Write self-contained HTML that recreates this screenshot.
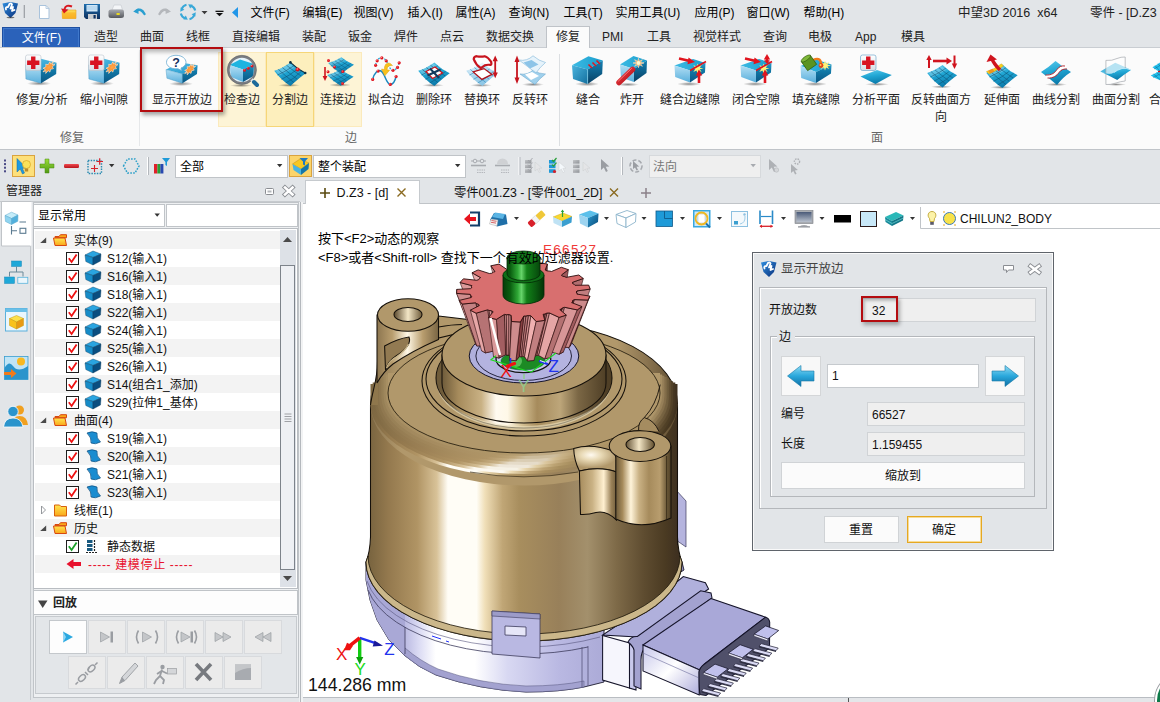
<!DOCTYPE html><html><head><meta charset="utf-8"><title>ZW3D</title><style>
*{box-sizing:border-box;margin:0;padding:0}
html,body{width:1160px;height:702px;overflow:hidden;background:#e2e5e8;}
body{font-family:"Liberation Sans","Noto Sans CJK SC",sans-serif;font-size:12px;color:#1a1a1a;position:relative}
.a{position:absolute}
.t{position:absolute;white-space:nowrap;line-height:16px;height:16px}
.c{text-align:center}
svg{position:absolute;overflow:visible}
</style></head><body>
<div class="t" style="left:250.5px;top:5px;font-size:12px;color:#000">文件(F)</div>
<div class="t" style="left:302.5px;top:5px;font-size:12px;color:#000">编辑(E)</div>
<div class="t" style="left:353.5px;top:5px;font-size:12px;color:#000">视图(V)</div>
<div class="t" style="left:407.5px;top:5px;font-size:12px;color:#000">插入(I)</div>
<div class="t" style="left:455.5px;top:5px;font-size:12px;color:#000">属性(A)</div>
<div class="t" style="left:508.5px;top:5px;font-size:12px;color:#000">查询(N)</div>
<div class="t" style="left:563.5px;top:5px;font-size:12px;color:#000">工具(T)</div>
<div class="t" style="left:615.5px;top:5px;font-size:12px;color:#000">实用工具(U)</div>
<div class="t" style="left:694.5px;top:5px;font-size:12px;color:#000">应用(P)</div>
<div class="t" style="left:746.5px;top:5px;font-size:12px;color:#000">窗口(W)</div>
<div class="t" style="left:803.5px;top:5px;font-size:12px;color:#000">帮助(H)</div>
<div class="t" style="left:958px;top:5px;font-size:12.5px;color:#222">中望3D 2016&nbsp; x64</div>
<div class="t" style="left:1090px;top:5px;font-size:12.5px;color:#222">零件 - [D.Z3</div>
<svg style="left:0px;top:0px" width="260" height="28" viewBox="0 0 260 28">
<defs>
<linearGradient id="tbLogo" x1="0" y1="0" x2="1" y2="1"><stop offset="0" stop-color="#2f8fe0"/><stop offset="1" stop-color="#0a2f7a"/></linearGradient>
<linearGradient id="tbFold" x1="0" y1="0" x2="0" y2="1"><stop offset="0" stop-color="#ffe25a"/><stop offset="1" stop-color="#f59a14"/></linearGradient>
<linearGradient id="tbSave" x1="0" y1="0" x2="0" y2="1"><stop offset="0" stop-color="#1f6fae"/><stop offset="1" stop-color="#0d2f5e"/></linearGradient>
<linearGradient id="tbPrn" x1="0" y1="0" x2="0" y2="1"><stop offset="0" stop-color="#a8abb0"/><stop offset="1" stop-color="#55585e"/></linearGradient>
</defs>
<path d="M2.5,3.5 L10.5,2 L18,3.5 L15.5,13 L10.5,18 L5,13 Z" fill="url(#tbLogo)"/>
<path d="M6,9.5 Q5,7 8,7 L9.5,4 Q11,2.5 12,4.5 L10.5,8.5 L13,7 L12,11 L14.5,10" fill="none" stroke="#fff" stroke-width="1.8" stroke-linejoin="round" stroke-linecap="round"/>
<ellipse cx="10.5" cy="17.5" rx="4" ry="0.8" fill="#222" opacity="0.6"/>
<rect x="23.7" y="5" width="1.2" height="13" fill="#9a9da2"/>
<path d="M39.5,5.5 H46 L49,8.5 V18.5 H39.5 Z" fill="#fff" stroke="#a9c3dc" stroke-width="1"/>
<path d="M46,5.5 V8.5 H49" fill="none" stroke="#a9c3dc" stroke-width="0.8"/>
<path d="M62,11 H67 L68.5,10 H76 V18.5 H62.5 Z" fill="url(#tbFold)" stroke="#e8a020" stroke-width="0.6"/>
<path d="M62,12.5 H75.5 L76,18.5 H62.5 Z" fill="#fbb829" opacity="0.7"/>
<path d="M72,6.5 Q66,4 64.5,9" fill="none" stroke="#d81820" stroke-width="2"/>
<path d="M61,8.5 L68.5,9.5 L64,13.5 Z" fill="#d81820"/>
<path d="M84,4 H100 V19 H86 L84,17 Z" fill="url(#tbSave)"/>
<rect x="86.5" y="5" width="11" height="6.5" fill="#cfe6f7"/>
<path d="M86.5,7 H97.5 M86.5,9 H97.5" stroke="#8fbfe2" stroke-width="0.7"/>
<rect x="88" y="14" width="9" height="5" fill="#c9ccd0"/>
<rect x="93.5" y="15" width="2.2" height="3.5" fill="#0d2f5e"/>
<path d="M112,10 L114,5 H121 L122.5,10 Z" fill="#f4f6f8" stroke="#c5c8cc" stroke-width="0.6"/>
<path d="M108.5,11.5 Q108.5,9.5 111,9.5 H121.5 Q124,9.5 124,11.5 V15.5 Q124,18 121,18 H111 Q108.5,18 108.5,15.5 Z" fill="url(#tbPrn)"/>
<rect x="116.5" y="13" width="3.2" height="2" fill="#e8d820"/>
<path d="M136,11 Q141,7.5 144.5,14" fill="none" stroke="#2a9fd0" stroke-width="2.4" stroke-linecap="round"/>
<path d="M133.2,11.5 L138.5,8.3 L138.5,14 Z" fill="#2a9fd0"/>
<path d="M159.5,14 Q163,7.5 168,11" fill="none" stroke="#b4b7bb" stroke-width="2.4" stroke-linecap="round"/>
<path d="M171,11.5 L165.6,8.3 L165.6,14 Z" fill="#b4b7bb"/>
<g transform="rotate(0 188 12)"><path d="M181.5,9.5 Q183,5.5 186.5,4.8" fill="none" stroke="#38a8d8" stroke-width="2"/><path d="M180.2,11.8 L180.8,7.2 L184.4,9.8 Z" fill="#38a8d8"/></g>
<g transform="rotate(90 188 12)"><path d="M181.5,9.5 Q183,5.5 186.5,4.8" fill="none" stroke="#38a8d8" stroke-width="2"/><path d="M180.2,11.8 L180.8,7.2 L184.4,9.8 Z" fill="#38a8d8"/></g>
<g transform="rotate(180 188 12)"><path d="M181.5,9.5 Q183,5.5 186.5,4.8" fill="none" stroke="#38a8d8" stroke-width="2"/><path d="M180.2,11.8 L180.8,7.2 L184.4,9.8 Z" fill="#38a8d8"/></g>
<g transform="rotate(270 188 12)"><path d="M181.5,9.5 Q183,5.5 186.5,4.8" fill="none" stroke="#38a8d8" stroke-width="2"/><path d="M180.2,11.8 L180.8,7.2 L184.4,9.8 Z" fill="#38a8d8"/></g>
<path d="M201.5,11 H207.5 L204.5,14.2 Z" fill="#3a3a3a"/>
<rect x="215.5" y="10.7" width="8" height="1.3" fill="#111"/>
<path d="M216,13 H223 L219.5,16.3 Z" fill="#111"/>
<path d="M238,7 V18 L232,12.5 Z" fill="#2196e8"/>
</svg>
<div class="a" style="left:2px;top:27px;width:78px;height:21px;background:#2b62ba;border:1px solid #1d4fa2;border-bottom:none;box-shadow:inset 0 0 0 1px #3f78cc"></div>
<div class="t c" style="left:3.0px;top:30px;width:77px;color:#fff;font-size:12px">文件(F)</div>
<div class="a" style="left:0px;top:47px;width:1160px;height:103px;background:#fbfbfb;border-top:1px solid #c9cdd2;border-bottom:1px solid #c0c4c9"></div>
<div class="a" style="left:546px;top:26px;width:44px;height:22px;background:#fbfbfb;border:1px solid #bfc3c8;border-bottom:none"></div>
<div class="t" style="left:94px;top:29px;font-size:12px;color:#222">造型</div>
<div class="t" style="left:140px;top:29px;font-size:12px;color:#222">曲面</div>
<div class="t" style="left:186px;top:29px;font-size:12px;color:#222">线框</div>
<div class="t" style="left:232px;top:29px;font-size:12px;color:#222">直接编辑</div>
<div class="t" style="left:302px;top:29px;font-size:12px;color:#222">装配</div>
<div class="t" style="left:348px;top:29px;font-size:12px;color:#222">钣金</div>
<div class="t" style="left:394px;top:29px;font-size:12px;color:#222">焊件</div>
<div class="t" style="left:440px;top:29px;font-size:12px;color:#222">点云</div>
<div class="t" style="left:486px;top:29px;font-size:12px;color:#222">数据交换</div>
<div class="t" style="left:556px;top:29px;font-size:12px;color:#222">修复</div>
<div class="t" style="left:602px;top:29px;font-size:12px;color:#222">PMI</div>
<div class="t" style="left:647px;top:29px;font-size:12px;color:#222">工具</div>
<div class="t" style="left:693px;top:29px;font-size:12px;color:#222">视觉样式</div>
<div class="t" style="left:763px;top:29px;font-size:12px;color:#222">查询</div>
<div class="t" style="left:808px;top:29px;font-size:12px;color:#222">电极</div>
<div class="t" style="left:855px;top:29px;font-size:12px;color:#222">App</div>
<div class="t" style="left:901px;top:29px;font-size:12px;color:#222">模具</div>
<div class="a" style="left:139px;top:50px;width:1px;height:96px;background:#e6e8ea"></div>
<div class="a" style="left:559px;top:54px;width:1px;height:92px;background:#dcdfe2"></div>
<div class="a" style="left:218px;top:52px;width:48px;height:75px;background:#fdf4d6;border:1px solid #fbeabc"></div>
<div class="a" style="left:314px;top:52px;width:48px;height:75px;background:#fdf4d6;border:1px solid #fbeabc"></div>
<div class="a" style="left:266px;top:52px;width:48px;height:75px;background:#fdefbd;border:1px solid #f6d678"></div>
<div class="a" style="left:140px;top:47px;width:83px;height:65px;border:2px solid #b40c10;box-shadow:2px 3px 4px rgba(0,0,0,.35),inset 2px 3px 4px rgba(0,0,0,.28)"></div>
<div class="a c" style="left:2px;top:92px;width:80px;line-height:17px;font-size:12px;color:#222">修复/分析</div>
<div class="a c" style="left:64px;top:92px;width:80px;line-height:17px;font-size:12px;color:#222">缩小间隙</div>
<div class="a c" style="left:142px;top:92px;width:80px;line-height:17px;font-size:12px;color:#222">显示开放边</div>
<div class="a c" style="left:202px;top:92px;width:80px;line-height:17px;font-size:12px;color:#222">检查边</div>
<div class="a c" style="left:250px;top:92px;width:80px;line-height:17px;font-size:12px;color:#222">分割边</div>
<div class="a c" style="left:298px;top:92px;width:80px;line-height:17px;font-size:12px;color:#222">连接边</div>
<div class="a c" style="left:346px;top:92px;width:80px;line-height:17px;font-size:12px;color:#222">拟合边</div>
<div class="a c" style="left:394px;top:92px;width:80px;line-height:17px;font-size:12px;color:#222">删除环</div>
<div class="a c" style="left:442px;top:92px;width:80px;line-height:17px;font-size:12px;color:#222">替换环</div>
<div class="a c" style="left:490px;top:92px;width:80px;line-height:17px;font-size:12px;color:#222">反转环</div>
<div class="a c" style="left:548px;top:92px;width:80px;line-height:17px;font-size:12px;color:#222">缝合</div>
<div class="a c" style="left:592px;top:92px;width:80px;line-height:17px;font-size:12px;color:#222">炸开</div>
<div class="a c" style="left:650px;top:92px;width:80px;line-height:17px;font-size:12px;color:#222">缝合边缝隙</div>
<div class="a c" style="left:716px;top:92px;width:80px;line-height:17px;font-size:12px;color:#222">闭合空隙</div>
<div class="a c" style="left:776px;top:92px;width:80px;line-height:17px;font-size:12px;color:#222">填充缝隙</div>
<div class="a c" style="left:836px;top:92px;width:80px;line-height:17px;font-size:12px;color:#222">分析平面</div>
<div class="a c" style="left:901px;top:92px;width:80px;line-height:17px;font-size:12px;color:#222">反转曲面方<br>向</div>
<div class="a c" style="left:962px;top:92px;width:80px;line-height:17px;font-size:12px;color:#222">延伸面</div>
<div class="a c" style="left:1016px;top:92px;width:80px;line-height:17px;font-size:12px;color:#222">曲线分割</div>
<div class="a c" style="left:1076px;top:92px;width:80px;line-height:17px;font-size:12px;color:#222">曲面分割</div>
<div class="a c" style="left:1127px;top:92px;width:80px;line-height:17px;font-size:12px;color:#222">合并面</div>
<div class="t c" style="left:42.0px;top:130px;width:60px;color:#666">修复</div>
<div class="t c" style="left:321.0px;top:130px;width:60px;color:#666">边</div>
<div class="t c" style="left:847.0px;top:130px;width:60px;color:#666">面</div>
<svg style="left:0px;top:0px" width="1160" height="100" viewBox="0 0 1160 100"><defs>
<linearGradient id="cL" x1="0" y1="0" x2="0" y2="1"><stop offset="0" stop-color="#b4dff4"/><stop offset="1" stop-color="#58afdc"/></linearGradient>
<linearGradient id="cR" x1="0" y1="0" x2="0" y2="1"><stop offset="0" stop-color="#2a9ccc"/><stop offset="0.35" stop-color="#127aa8"/><stop offset="1" stop-color="#0a5684"/></linearGradient>
<linearGradient id="cT" x1="0" y1="0" x2="1" y2="1"><stop offset="0" stop-color="#5cc4ea"/><stop offset="1" stop-color="#1c93c8"/></linearGradient>
<linearGradient id="dL" x1="0" y1="0" x2="1" y2="1"><stop offset="0" stop-color="#4ab4de"/><stop offset="1" stop-color="#14709f"/></linearGradient>
<linearGradient id="dR" x1="0" y1="0" x2="0" y2="1"><stop offset="0" stop-color="#1581b4"/><stop offset="1" stop-color="#073f63"/></linearGradient>
<linearGradient id="dT" x1="0" y1="0" x2="1" y2="0"><stop offset="0" stop-color="#3cbbe4"/><stop offset="1" stop-color="#1a9ccc"/></linearGradient>
<linearGradient id="mesh" x1="0" y1="0" x2="0.3" y2="1"><stop offset="0" stop-color="#5ccaec"/><stop offset="0.5" stop-color="#20a6d4"/><stop offset="1" stop-color="#0c7cac"/></linearGradient>
<linearGradient id="meshL" x1="0" y1="0" x2="0.3" y2="1"><stop offset="0" stop-color="#d4ecf8"/><stop offset="1" stop-color="#8cc6e6"/></linearGradient>
<radialGradient id="shd"><stop offset="0" stop-color="#000" stop-opacity="0.45"/><stop offset="1" stop-color="#000" stop-opacity="0"/></radialGradient>
<radialGradient id="burst"><stop offset="0" stop-color="#ffa84a"/><stop offset="0.7" stop-color="#f88f32"/><stop offset="1" stop-color="#f07a22"/></radialGradient>
<linearGradient id="wsq" x1="0" y1="0" x2="0" y2="1"><stop offset="0" stop-color="#ffffff"/><stop offset="1" stop-color="#d6dde4"/></linearGradient>
<linearGradient id="redst" x1="0" y1="0" x2="1" y2="1"><stop offset="0" stop-color="#f0444a"/><stop offset="1" stop-color="#b00a12"/></linearGradient>
</defs><g transform="translate(25,55)"><ellipse cx="14" cy="28.5" rx="12" ry="2.2" fill="url(#shd)"/><polygon points="0.5,10 15,3.5 31.5,7.7 16,15" fill="url(#cT)" /><polygon points="0.5,10 16,15 16,28.3 0.9,24" fill="url(#cL)" stroke="#3f93bf" stroke-width="0.4"/><polygon points="16,15 31.5,7.7 31.2,19 16,28.3" fill="url(#cR)" /><g transform="skewY(-25) translate(0,11)"><polygon points="30.0,12.5 27.2,13.5 28.5,15.9 25.6,15.2 24.9,17.7 23.2,15.5 20.7,17.1 21.0,14.5 18.0,14.3 20.2,12.5 18.0,10.7 21.0,10.5 20.7,7.9 23.2,9.5 24.9,7.3 25.6,9.8 28.5,9.1 27.2,11.5" fill="url(#burst)" stroke="#ffe4c8" stroke-width="0.6"/></g><rect x="0.5" y="0" width="15.5" height="15.5" rx="2" fill="url(#wsq)" stroke="#b8c2cc" stroke-width="0.6"/><path d="M6.05,1.6 h4.4 v3.95 h3.95 v4.4 h-3.95 v3.95 h-4.4 v-3.95 h-3.95 v-4.4 h3.95 z" fill="#d81422"/></g>
<g transform="translate(88,55)"><ellipse cx="14" cy="28.5" rx="12" ry="2.2" fill="url(#shd)"/><polygon points="0.5,10 15,3.5 31.5,7.7 16,15" fill="url(#cT)" /><polygon points="0.5,10 16,15 16,28.3 0.9,24" fill="url(#cL)" stroke="#3f93bf" stroke-width="0.4"/><polygon points="16,15 31.5,7.7 31.2,19 16,28.3" fill="url(#cR)" /><g transform="skewY(-25) translate(0,11)"><polygon points="30.0,12.5 27.2,13.5 28.5,15.9 25.6,15.2 24.9,17.7 23.2,15.5 20.7,17.1 21.0,14.5 18.0,14.3 20.2,12.5 18.0,10.7 21.0,10.5 20.7,7.9 23.2,9.5 24.9,7.3 25.6,9.8 28.5,9.1 27.2,11.5" fill="url(#burst)" stroke="#ffe4c8" stroke-width="0.6"/></g><rect x="0.5" y="0" width="15.5" height="15.5" rx="2" fill="url(#wsq)" stroke="#b8c2cc" stroke-width="0.6"/><path d="M6.05,1.6 h4.4 v3.95 h3.95 v4.4 h-3.95 v3.95 h-4.4 v-3.95 h-3.95 v-4.4 h3.95 z" fill="#d81422"/></g>
<g transform="translate(166,55)"><ellipse cx="15" cy="28.8" rx="12" ry="2.2" fill="url(#shd)"/><polygon points="0,14.5 14.7,7.6 31.6,10.2 16.4,19" fill="url(#cT)" /><polygon points="0,14.5 16.4,19 16.4,28.3 0.9,23.2" fill="url(#cL)" stroke="#3f93bf" stroke-width="0.4"/><polygon points="16.4,19 31.6,10.2 31,19 16.4,28.3" fill="url(#cR)" /><g transform="skewY(-28) translate(0,13.5)"><polygon points="29.6,13.5 27.0,14.4 28.3,16.6 25.6,15.9 25.0,18.2 23.4,16.2 21.2,17.6 21.5,15.2 18.7,15.1 20.8,13.5 18.7,11.9 21.5,11.8 21.2,9.4 23.4,10.8 25.0,8.8 25.6,11.1 28.3,10.4 27.0,12.6" fill="url(#burst)" stroke="#ffe4c8" stroke-width="0.6"/></g><path d="M10,0.3 C16.5,0.3 20,4 20,7.3 C20,10 17.5,12.3 15,13 L15.5,15.5 L12,13.8 C4,14.3 0.5,10.5 0.5,7.3 C0.5,3.5 4.5,0.3 10,0.3 Z" fill="#fff" stroke="#6aaad0" stroke-width="0.8"/><text x="6.2" y="11.8" font-family="Liberation Sans, sans-serif" font-weight="bold" font-size="12.5" fill="#16315e">?</text></g>
<g transform="translate(226,55)"><ellipse cx="15" cy="30.5" rx="11" ry="1.6" fill="url(#shd)"/><circle cx="15.900" cy="14.900" r="13" fill="#e4f2fa"/><polygon points="3.5,10 14,4.5 28,9 17,14.5" fill="#1eb4e0" /><polygon points="3.5,10 17,14.5 17,27 5,22" fill="url(#cL)" /><polygon points="17,14.5 28,9 27.5,21 17,27" fill="url(#cR)" /><circle cx="15.900" cy="14.900" r="13.400" fill="none" stroke="#7a7d82" stroke-width="2.400"/><circle cx="15.900" cy="14.900" r="14.600" fill="none" stroke="#55585d" stroke-width="0.500"/><path d="M25.500,24.500 L30,29" stroke="#e4e6e8" stroke-width="3.400"/><path d="M28,27 L31,30" stroke="#1d6a9a" stroke-width="4" stroke-linecap="round"/><circle cx="18.5" cy="15.2" r="1.5" fill="#e0141e"/><circle cx="18.1" cy="14.7" r="0.5249999999999999" fill="#ff9a9a"/><circle cx="22.2" cy="13.2" r="1.5" fill="#e0141e"/><circle cx="21.8" cy="12.7" r="0.5249999999999999" fill="#ff9a9a"/><circle cx="26" cy="11" r="1.5" fill="#e0141e"/><circle cx="25.6" cy="10.5" r="0.5249999999999999" fill="#ff9a9a"/></g>
<g transform="translate(274,55)"><ellipse cx="15" cy="30.3" rx="11" ry="1.6" fill="url(#shd)"/><path d="M0.200,15.700 Q8,13.500 16.400,7.400 Q23,14 31.700,18.200 Q25,23 16.400,31 Q7,25 0.200,15.700 Z" fill="url(#mesh)"/><path d="M1.500,15.600 Q8,13.800 16,8.600 Q18,11 20,12.600 Q12,17.500 5.500,20.500 Q3,18 1.500,15.600 Z" fill="#ffffff" fill-opacity="0.22"/><g fill="none" stroke="#0c4f72" stroke-width="0.55"><path d="M4.300,14.400 Q11,20.500 19.800,27.500"/><path d="M8.400,12.600 Q15.500,18.500 23.200,24.200"/><path d="M12.500,10.200 Q19.500,16 27.200,21"/><path d="M3.500,20 Q11,17 19.800,10.800"/><path d="M7.500,24.300 Q15,21 23.600,14"/><path d="M11.800,28 Q19,24.500 27.600,16.200"/></g><path d="M16.400,7.400 Q23,14 31.700,18.200" fill="none" stroke="#0b2f44" stroke-width="1.1"/><circle cx="16.400" cy="7.400" r="1.300" fill="#0b2f44"/><circle cx="31.200" cy="18" r="1.300" fill="#0b2f44"/><circle cx="23.6" cy="14.5" r="2.1" fill="#e0141e"/><circle cx="23.200000000000003" cy="14.0" r="0.735" fill="#ff9a9a"/></g>
<g transform="translate(322,55)"><ellipse cx="18" cy="30" rx="11" ry="1.8" fill="url(#shd)"/><g transform="translate(5,9) scale(0.84,0.7)"><path d="M0.200,15.700 Q8,13.500 16.400,7.400 Q23,14 31.700,18.200 Q25,23 16.400,31 Q7,25 0.200,15.700 Z" fill="url(#mesh)"/><path d="M1.500,15.600 Q8,13.800 16,8.600 Q18,11 20,12.600 Q12,17.500 5.500,20.500 Q3,18 1.500,15.600 Z" fill="#ffffff" fill-opacity="0.22"/><g fill="none" stroke="#0c4f72" stroke-width="0.55"><path d="M4.300,14.400 Q11,20.500 19.800,27.500"/><path d="M8.400,12.600 Q15.500,18.500 23.200,24.200"/><path d="M12.500,10.200 Q19.500,16 27.200,21"/><path d="M3.500,20 Q11,17 19.800,10.800"/><path d="M7.500,24.300 Q15,21 23.600,14"/><path d="M11.800,28 Q19,24.500 27.600,16.200"/></g></g><g transform="translate(6,-3) scale(0.82,0.7)"><path d="M0.200,15.700 Q8,13.500 16.400,7.400 Q23,14 31.700,18.200 Q25,23 16.400,31 Q7,25 0.200,15.700 Z" fill="url(#mesh)"/><path d="M1.500,15.600 Q8,13.800 16,8.600 Q18,11 20,12.600 Q12,17.500 5.500,20.500 Q3,18 1.500,15.600 Z" fill="#ffffff" fill-opacity="0.22"/><g fill="none" stroke="#0c4f72" stroke-width="0.55"><path d="M4.300,14.400 Q11,20.500 19.800,27.500"/><path d="M8.400,12.600 Q15.500,18.500 23.200,24.200"/><path d="M12.500,10.200 Q19.500,16 27.200,21"/><path d="M3.500,20 Q11,17 19.800,10.800"/><path d="M7.500,24.300 Q15,21 23.600,14"/><path d="M11.800,28 Q19,24.500 27.600,16.200"/></g></g><path d="M3,12 V23.5" stroke="#d0141e" stroke-width="1.6"/><path d="M0.6,21 H5.4 L3,26 Z" fill="#d0141e"/><circle cx="6.5" cy="5.5" r="1.5" fill="#e0141e"/><circle cx="6.1" cy="5.0" r="0.5249999999999999" fill="#ff9a9a"/><circle cx="12.5" cy="12" r="1.5" fill="#e0141e"/><circle cx="12.1" cy="11.5" r="0.5249999999999999" fill="#ff9a9a"/><circle cx="20.8" cy="16.5" r="1.6" fill="#e0141e"/><circle cx="20.400000000000002" cy="16.0" r="0.5599999999999999" fill="#ff9a9a"/><circle cx="6" cy="16.8" r="1.5" fill="#e0141e"/><circle cx="5.6" cy="16.3" r="0.5249999999999999" fill="#ff9a9a"/><circle cx="20.5" cy="28.5" r="1.5" fill="#e0141e"/><circle cx="20.1" cy="28.0" r="0.5249999999999999" fill="#ff9a9a"/></g>
<g transform="translate(370,55)"><path d="M5.600,10.300 Q6.500,3 11.800,2.900 Q16,3 18.800,10.700 Q21,15.500 23,15.300 Q27,15 29.200,7.800" fill="none" stroke="#2aa8d8" stroke-width="1.300" stroke-dasharray="2,1.300"/><path d="M2.700,24.400 C4,18 8,14.500 11,16 C15,18 16,29 20.300,29.400 C24,29.500 25.500,24 26.100,21.500" fill="none" stroke="#1a88c0" stroke-width="1.500"/><path d="M22.500,10.500 Q19,6 15.500,9.500 Q14,12 14.500,14.500 L11.500,14 L14.800,20.800 L19.600,15.200 L17,14.800 Q17,12 19,11 Q20.800,10.300 22.500,10.500 Z" fill="#f8c21c" stroke="#e0a010" stroke-width="0.500"/><circle cx="5.6" cy="10.3" r="1.6" fill="#e0141e"/><circle cx="5.199999999999999" cy="9.8" r="0.5599999999999999" fill="#ff9a9a"/><circle cx="7.2" cy="5.8" r="1.6" fill="#e0141e"/><circle cx="6.8" cy="5.3" r="0.5599999999999999" fill="#ff9a9a"/><circle cx="11.8" cy="2.9" r="1.6" fill="#e0141e"/><circle cx="11.4" cy="2.4" r="0.5599999999999999" fill="#ff9a9a"/><circle cx="16.2" cy="5.8" r="1.6" fill="#e0141e"/><circle cx="15.799999999999999" cy="5.3" r="0.5599999999999999" fill="#ff9a9a"/><circle cx="23" cy="15.3" r="1.6" fill="#e0141e"/><circle cx="22.6" cy="14.8" r="0.5599999999999999" fill="#ff9a9a"/><circle cx="27.5" cy="12.4" r="1.6" fill="#e0141e"/><circle cx="27.1" cy="11.9" r="0.5599999999999999" fill="#ff9a9a"/><circle cx="29.2" cy="7.8" r="1.6" fill="#e0141e"/><circle cx="28.8" cy="7.3" r="0.5599999999999999" fill="#ff9a9a"/><circle cx="2.7" cy="24.4" r="1.6" fill="#e0141e"/><circle cx="2.3000000000000003" cy="23.9" r="0.5599999999999999" fill="#ff9a9a"/><circle cx="8.1" cy="16.1" r="1.6" fill="#e0141e"/><circle cx="7.699999999999999" cy="15.600000000000001" r="0.5599999999999999" fill="#ff9a9a"/><circle cx="20.3" cy="29.4" r="1.6" fill="#e0141e"/><circle cx="19.900000000000002" cy="28.9" r="0.5599999999999999" fill="#ff9a9a"/><circle cx="26.1" cy="21.5" r="1.6" fill="#e0141e"/><circle cx="25.700000000000003" cy="21.0" r="0.5599999999999999" fill="#ff9a9a"/></g>
<g transform="translate(418,55)"><ellipse cx="15" cy="30.3" rx="11" ry="1.6" fill="url(#shd)"/><path d="M0.200,15.700 Q8,13.500 16.400,7.400 Q23,14 31.700,18.200 Q25,23 16.400,31 Q7,25 0.200,15.700 Z" fill="url(#mesh)"/><path d="M1.500,15.600 Q8,13.800 16,8.600 Q18,11 20,12.600 Q12,17.500 5.500,20.500 Q3,18 1.500,15.600 Z" fill="#ffffff" fill-opacity="0.22"/><g fill="none" stroke="#0c4f72" stroke-width="0.55"><path d="M4.300,14.400 Q11,20.500 19.800,27.500"/><path d="M8.400,12.600 Q15.500,18.500 23.200,24.200"/><path d="M12.500,10.200 Q19.500,16 27.200,21"/><path d="M3.500,20 Q11,17 19.800,10.800"/><path d="M7.500,24.300 Q15,21 23.600,14"/><path d="M11.800,28 Q19,24.500 27.600,16.200"/></g><polygon points="8,16.5 17,12 24.5,18 14.5,23.5" fill="#fff" stroke="#c8141e" stroke-width="1.3"/><path d="M12,13.5 L21,23 M9.5,20.5 L22.5,14.5" stroke="#123a5e" stroke-width="2"/></g>
<g transform="translate(466,55)"><ellipse cx="15" cy="30.3" rx="11" ry="1.6" fill="url(#shd)"/><path d="M0.200,15.700 Q8,13.500 16.400,7.400 Q23,14 31.700,18.200 Q25,23 16.400,31 Q7,25 0.200,15.700 Z" fill="url(#meshL)"/><path d="M1.500,15.600 Q8,13.800 16,8.600 Q18,11 20,12.600 Q12,17.500 5.500,20.500 Q3,18 1.500,15.600 Z" fill="#ffffff" fill-opacity="0.22"/><g fill="none" stroke="#3a90c0" stroke-width="0.7"><path d="M4.300,14.400 Q11,20.500 19.800,27.500"/><path d="M8.400,12.600 Q15.500,18.500 23.200,24.200"/><path d="M12.500,10.200 Q19.500,16 27.200,21"/><path d="M3.500,20 Q11,17 19.800,10.800"/><path d="M7.500,24.300 Q15,21 23.600,14"/><path d="M11.800,28 Q19,24.500 27.600,16.200"/></g><polygon points="7.2,16.9 18,13.6 25.9,19.4 15.9,24.4" fill="#fff" stroke="#b01018" stroke-width="1.300"/><path d="M7.700,4.100 Q8,1.500 10.600,1.200 Q15,2.200 18.800,1.200 Q22,2 25,6.600 Q26,9.500 24.600,9.900 Q21,9.500 18.800,10.300 L14.700,13.200 Q10,10 7.700,4.100 Z" fill="#ffffff" fill-opacity="0.5" stroke="#c8141e" stroke-width="2.200" stroke-linejoin="round"/><path d="M29.200,3.500 V20" stroke="#c8141e" stroke-width="1.800"/><path d="M26.600,6.200 L29.200,0.500 L31.800,6.200 Z M26.600,17.500 L29.200,23.200 L31.800,17.500 Z" fill="#c8141e"/></g>
<g transform="translate(514,55)"><ellipse cx="19" cy="29.5" rx="11" ry="1.8" fill="url(#shd)"/><path d="M6,19 Q14,20 19,15 Q25,19 31.5,19 Q25,24 21,29.5 Q13,24 6,19 Z" fill="#9fd0ec" stroke="#5a9cc6" stroke-width="0.5"/><polygon points="11,19.5 18,17 25,21 17,25" fill="#fff" /><path d="M5,5 Q13,6.5 19,0.8 Q25,6 31.5,7.5 Q26,12 22,18 Q13,11 5,5 Z" fill="#e2f1fa" fill-opacity="0.85" stroke="#7db6d8" stroke-width="0.6"/><polygon points="9.5,7.5 17.5,5 24.5,9.5 16,13.5" fill="#8cc4e8" /><path d="M3,4 V25" stroke="#c8141e" stroke-width="1.8"/><path d="M0.5,7 L3,0.5 L5.5,7 Z M0.5,22.5 L3,29 L5.5,22.5 Z" fill="#c8141e"/></g>
<g transform="translate(572,55)"><ellipse cx="15" cy="29" rx="12" ry="2.2" fill="url(#shd)"/><polygon points="0,10.2 16.4,1.3 30.8,5.4 15.6,14.5" fill="url(#dT)" /><polygon points="0,10.2 15.6,14.5 15.6,29 1,24" fill="url(#dL)" /><polygon points="15.6,14.5 30.8,5.4 30.2,19 15.6,29" fill="url(#dR)" /><path d="M15.6,14.5 V29" stroke="#7fd4f0" stroke-width="0.7"/><path d="M16.5,9.5 L20,13 M20.5,7.5 L24,11 M24.5,5.5 L28,9" stroke="#e0141e" stroke-width="1.5"/></g>
<g transform="translate(616,55)"><ellipse cx="12" cy="29.5" rx="11" ry="1.8" fill="url(#shd)"/><polygon points="4,9.5 17.5,1 31,5.5 18,14" fill="url(#dT)" /><polygon points="4,9.5 18,14 18,27 5,22.5" fill="url(#cL)" /><polygon points="18,14 31,5.5 30.5,18 18,27" fill="url(#dR)" /><polygon points="28.0,8.0 24.5,8.7 26.4,11.3 23.3,9.7 22.5,12.7 21.7,9.7 18.6,11.3 20.5,8.7 17.0,8.0 20.5,7.3 18.6,4.7 21.7,6.3 22.5,3.3 23.3,6.3 26.4,4.7 24.5,7.3" fill="url(#burst)" stroke="#ffe4c8" stroke-width="0.6"/><circle cx="22.5" cy="8" r="2" fill="#fffbd0"/><path d="M3,27.5 L16.5,14.5" stroke="url(#redst)" stroke-width="5.5" stroke-linecap="round"/><path d="M2.5,26 L15.5,13.5" stroke="#ff8a8a" stroke-width="1" stroke-linecap="round" opacity="0.8"/></g>
<g transform="translate(674,55)"><ellipse cx="15" cy="29" rx="12" ry="2" fill="url(#shd)"/><polygon points="0.5,10.5 19,4 31.5,8 16,15.5" fill="url(#dT)" /><polygon points="0.5,10.5 16,15.5 16,27.5 1.2,22" fill="url(#cL)" /><polygon points="16,15.5 31.5,8 31,17.5 16,27.5" fill="url(#cR)" /><polygon points="29.5,13.5 25.8,14.3 27.7,17.1 24.5,15.5 23.5,18.6 22.5,15.5 19.3,17.1 21.2,14.3 17.5,13.5 21.2,12.7 19.3,9.9 22.5,11.5 23.5,8.4 24.5,11.5 27.7,9.9 25.8,12.7" fill="#fff27a" /><path d="M16,15.5 L32,6.5" stroke="#e0141e" stroke-width="1.6"/><path d="M5,3.5 L16,6" stroke="#e0141e" stroke-width="2.6"/><path d="M14.5,2.5 L21,7 L13.5,9.2 Z" fill="#e0141e"/><path d="M25,28 V19" stroke="#e0141e" stroke-width="2.6"/><path d="M21.8,20.5 L25,14.5 L28.2,20.5 Z" fill="#e0141e"/></g>
<g transform="translate(740,55)"><ellipse cx="15" cy="29" rx="12" ry="2" fill="url(#shd)"/><polygon points="0.5,10.5 19,4 31.5,8 16,15.5" fill="url(#dT)" /><polygon points="0.5,10.5 16,15.5 16,27.5 1.2,22" fill="url(#cL)" /><polygon points="16,15.5 31.5,8 31,17.5 16,27.5" fill="url(#cR)" /><polygon points="29.5,13.5 25.8,14.3 27.7,17.1 24.5,15.5 23.5,18.6 22.5,15.5 19.3,17.1 21.2,14.3 17.5,13.5 21.2,12.7 19.3,9.9 22.5,11.5 23.5,8.4 24.5,11.5 27.7,9.9 25.8,12.7" fill="#fff27a" /><path d="M16,15.5 L32,6.5" stroke="#e0141e" stroke-width="1.6"/><path d="M5,3.5 L16,6" stroke="#e0141e" stroke-width="2.6"/><path d="M14.5,2.5 L21,7 L13.5,9.2 Z" fill="#e0141e"/><path d="M25,28 V19" stroke="#e0141e" stroke-width="2.6"/><path d="M21.8,20.5 L25,14.5 L28.2,20.5 Z" fill="#e0141e"/><path d="M27,8 V2.5" stroke="#e0141e" stroke-width="2.6"/><path d="M23.8,4.5 L27,-1 L30.2,4.5 Z" fill="#e0141e"/><path d="M24.5,6 H29.5" stroke="#e0141e" stroke-width="1.5"/></g>
<g transform="translate(800,55)"><ellipse cx="15" cy="29" rx="12" ry="2" fill="url(#shd)"/><polygon points="0.5,11 16,4.5 31.5,9.5 16,17" fill="url(#dT)" /><polygon points="0.5,11 16,17 16,28 1.2,23" fill="url(#cL)" /><polygon points="16,17 31.5,9.5 31,18.5 16,28" fill="url(#cR)" /><polygon points="31.0,10.5 27.4,11.3 29.2,14.1 26.0,12.5 25.0,15.6 24.0,12.5 20.8,14.1 22.6,11.3 19.0,10.5 22.6,9.7 20.8,6.9 24.0,8.5 25.0,5.4 26.0,8.5 29.2,6.9 27.4,9.7" fill="#fff27a" /><path d="M13,5 Q22,1 21,12" fill="none" stroke="#f07a1a" stroke-width="2.4"/><circle cx="21" cy="10.5" r="2.4" fill="#e0441a"/><circle cx="20.5" cy="10" r="1" fill="#ffd24a"/><g transform="rotate(-35 9 8)"><rect x="3.5" y="2.5" width="11" height="11" fill="#5a9420" stroke="#2f5a0a" stroke-width="0.7"/><ellipse cx="9" cy="2.5" rx="5.5" ry="2" fill="#7fb83a" stroke="#2f5a0a" stroke-width="0.6"/></g></g>
<g transform="translate(860,55)"><ellipse cx="17" cy="29.3" rx="12" ry="1.6" fill="url(#shd)"/><polygon points="0.5,21.5 17,15 31.8,20 15.5,29" fill="url(#mesh)" /><path d="M9,13.5 L12,16 L15,13.5" fill="#dfe6ec"/><rect x="0.5" y="0" width="15.5" height="15.5" rx="2" fill="url(#wsq)" stroke="#5a9cc6" stroke-width="0.6"/><path d="M6.05,1.6 h4.4 v3.95 h3.95 v4.4 h-3.95 v3.95 h-4.4 v-3.95 h-3.95 v-4.4 h3.95 z" fill="#d81422"/></g>
<g transform="translate(926,55)"><g transform="translate(1,3) scale(0.95,0.95)"><ellipse cx="15" cy="30.3" rx="11" ry="1.6" fill="url(#shd)"/><path d="M0.200,15.700 Q8,13.500 16.400,7.400 Q23,14 31.700,18.200 Q25,23 16.400,31 Q7,25 0.200,15.700 Z" fill="url(#mesh)"/><path d="M1.500,15.600 Q8,13.800 16,8.600 Q18,11 20,12.600 Q12,17.500 5.500,20.500 Q3,18 1.500,15.600 Z" fill="#ffffff" fill-opacity="0.22"/><g fill="none" stroke="#0c4f72" stroke-width="0.55"><path d="M4.300,14.400 Q11,20.500 19.800,27.500"/><path d="M8.400,12.600 Q15.500,18.500 23.200,24.200"/><path d="M12.500,10.200 Q19.500,16 27.200,21"/><path d="M3.500,20 Q11,17 19.800,10.800"/><path d="M7.500,24.300 Q15,21 23.600,14"/><path d="M11.800,28 Q19,24.500 27.600,16.200"/></g></g><path d="M3,13 V3" stroke="#d0141e" stroke-width="2"/><path d="M0.3,5 L3,0 L5.7,5 Z" fill="#d0141e"/><path d="M7,6 H22" stroke="#d0141e" stroke-width="2.6"/><path d="M20.5,2.5 L26,6 L20.5,9.5 Z" fill="#d0141e"/><path d="M28.5,0.5 V10" stroke="#d0141e" stroke-width="2"/><path d="M25.8,8.5 L28.5,14 L31.2,8.5 Z" fill="#d0141e"/></g>
<g transform="translate(986,55)"><g transform="translate(0,2)"><ellipse cx="15" cy="30.3" rx="11" ry="1.6" fill="url(#shd)"/><path d="M0.200,15.700 Q8,13.500 16.400,7.400 Q23,14 31.700,18.200 Q25,23 16.400,31 Q7,25 0.200,15.700 Z" fill="url(#mesh)"/><path d="M1.500,15.600 Q8,13.800 16,8.600 Q18,11 20,12.600 Q12,17.500 5.500,20.500 Q3,18 1.500,15.600 Z" fill="#ffffff" fill-opacity="0.22"/><g fill="none" stroke="#0c4f72" stroke-width="0.55"><path d="M4.300,14.400 Q11,20.500 19.800,27.500"/><path d="M8.400,12.600 Q15.500,18.500 23.200,24.200"/><path d="M12.500,10.200 Q19.500,16 27.200,21"/><path d="M3.500,20 Q11,17 19.800,10.800"/><path d="M7.500,24.300 Q15,21 23.600,14"/><path d="M11.800,28 Q19,24.500 27.600,16.200"/></g></g><path d="M0.5,16.5 Q8,14.5 15.5,8.8 L17.5,11 Q11,15.5 3,19 Z" fill="#f7d21c" stroke="#c8941a" stroke-width="0.4"/><path d="M4,18.5 L8.5,16.5 L6.5,13.8 L2.2,15.8 Z" fill="#f07a1a" opacity="0.7"/><path d="M14,15 Q8,9 6,4" fill="none" stroke="#d0141e" stroke-width="3.4"/><path d="M0.5,7 L4.5,-0.5 L11,4.5 Z" fill="#d0141e"/></g>
<g transform="translate(1040,55)"><ellipse cx="16" cy="29.5" rx="11" ry="1.6" fill="url(#shd)"/><path d="M1,17 Q9,12 15.5,6 Q23,12 31,17 Q23,22 17,30 Q9,23 1,17 Z" fill="url(#mesh)"/><path d="M6,21.5 C12,22 16,19 18,16 C20,13 23,12 26,12.5" fill="none" stroke="#fff" stroke-width="3.4"/><path d="M5.5,20 C12,20.5 15,17.5 17,14.5 C19,11.5 22,10.5 25,11 M7.5,23 C13,23.5 17,20.5 19,17.5 C21,14.5 24,13.8 27,14" fill="none" stroke="#b01820" stroke-width="0.9"/></g>
<g transform="translate(1100,55)"><ellipse cx="16" cy="29.5" rx="10" ry="1.4" fill="url(#shd)"/><path d="M0.300,16.400 Q8,12 15.200,7.800 Q23,11 31,15 Q26,12.500 22,13.500 Q17,15 14,17.500 Q9,20.500 0.300,16.400 Z" fill="#4ab8e0"/><path d="M5.900,5.400 Q12,6 17,3.500 Q21,1.800 25.200,2 V26 Q20,26.500 16,28 Q10,30 5.900,29.500 Z" fill="#ffffff" fill-opacity="0.6" stroke="#a4a8ad" stroke-width="0.7"/><path d="M0.300,16.400 Q9,20.500 14,17.500 Q17,15 22,13.500 Q26,12.500 31,15 Q24,19.500 17.200,25 Q9,20.500 0.300,16.400 Z" fill="url(#mesh)"/><path d="M14,17.500 Q17,15 22,13.500 Q26,12.500 31,15" fill="none" stroke="#bfeaf8" stroke-width="0.9"/></g>
<g transform="translate(1150,55)"><path d="M2.400,12.300 Q7,9.500 12,6 L12,18.500 Q7,15.500 2.400,12.300 Z" fill="#22c0ec"/><path d="M0.700,20.500 Q6,18 12,14.500 L12,26 Q6,24 0.700,20.500 Z" fill="#22c0ec"/><path d="M5,10.600 L10,16 M8,8.700 L10,11 M3.500,19 L10,24.500 M6.500,17.500 L10,20.500 M4,14 L10,10.500 M3,22.500 L10,19" stroke="#0c6a94" stroke-width="0.5" fill="none"/><path d="M8,16.500 h3" stroke="#d0141e" stroke-width="1.4"/></g>
</svg>
<div class="a" style="left:175px;top:155px;width:113px;height:23px;background:#fff;border:1px solid #c0c4c8"></div>
<div class="t" style="left:180px;top:158.5px;color:#000">全部</div>
<div class="a" style="left:313px;top:155px;width:153px;height:23px;background:#fff;border:1px solid #c0c4c8"></div>
<div class="t" style="left:318px;top:158.5px;color:#000">整个装配</div>
<div class="a" style="left:649px;top:155px;width:112px;height:23px;background:#efefef;border:1px solid #d6d9dc"></div>
<div class="t" style="left:653px;top:158.5px;color:#777">法向</div>
<svg style="left:0px;top:150px" width="1160" height="32" viewBox="0 150 1160 32"><defs><linearGradient id="gplus" x1="0" y1="0" x2="0" y2="1"><stop offset="0" stop-color="#9adc3a"/><stop offset="1" stop-color="#4f9a14"/></linearGradient>
    <linearGradient id="gminus" x1="0" y1="0" x2="0" y2="1"><stop offset="0" stop-color="#f04a50"/><stop offset="1" stop-color="#b8141c"/></linearGradient>
    <linearGradient id="ggray" x1="0" y1="0" x2="1" y2="1"><stop offset="0" stop-color="#c4c6c9"/><stop offset="1" stop-color="#8e9196"/></linearGradient></defs><rect x="4" y="159.5" width="2" height="2" fill="#4a4a86"/><rect x="4" y="163.1" width="2" height="2" fill="#4a4a86"/><rect x="4" y="166.7" width="2" height="2" fill="#4a4a86"/><rect x="4" y="170.3" width="2" height="2" fill="#4a4a86"/><rect x="12.5" y="155.5" width="22" height="21" fill="#fde07a" stroke="#d9a340" stroke-width="1"/><path d="M17,158.5 L17,172 L20.2,169 L22.5,174 L24.5,173 L22.3,168.3 L26.5,168 Z" fill="#1e9ae0" stroke="#0f6aa8" stroke-width="0.5"/><circle cx="26.5" cy="164.5" r="4" fill="#fbe15a" stroke="#d8a520" stroke-width="0.7"/><rect x="24.8" y="168.5" width="3.4" height="3" fill="#b98a2a"/><path d="M45,159 h4 v5 h5 v4 h-5 v5 h-4 v-5 h-5 v-4 h5 z" fill="url(#gplus)" stroke="#4a8a14" stroke-width="0.5"/><rect x="64" y="164" width="15" height="4" rx="1.2" fill="url(#gminus)"/><rect x="88" y="160.5" width="13.5" height="13" fill="none" stroke="#2a8ab0" stroke-width="1.4" stroke-dasharray="1.5,1.2"/><path d="M91,168.5 h7 M94.5,165 v7" stroke="#d8202a" stroke-width="1.1"/><path d="M96.5,161.5 h6.5 M99.7,158.3 v6.5" stroke="#d8202a" stroke-width="1.2"/><path d="M109,164 H114.4 L111.7,167.2 Z" fill="#333"/><polygon points="123.5,166 127.5,159 135,159 139,166 135,173 127.5,173" fill="none" stroke="#2a9fc8" stroke-width="1.5" stroke-dasharray="1.6,1.3"/><rect x="147" y="157" width="1" height="18" fill="#fff"/><rect x="148" y="157" width="1" height="18" fill="#b4b8bd"/><rect x="154" y="164" width="3.4" height="9.5" fill="#e0202a"/><rect x="157.4" y="164" width="3" height="9.5" fill="#28a038"/><rect x="160.4" y="164" width="3" height="9.5" fill="#2848b0"/><path d="M162,158 H170 L167,162 V166 L165.4,165 V162 Z" fill="#1e9ad8"/><path d="M277,164 H282.4 L279.7,167.2 Z" fill="#333"/><path d="M455,164 H460.4 L457.7,167.2 Z" fill="#333"/><path d="M750.5,164 H755.9 L753.2,167.2 Z" fill="#a8abb0"/><rect x="289.5" y="155.5" width="22" height="21" fill="#fbd46a" stroke="#d9a340" stroke-width="1"/><polygon points="292.5,164 300,159 309,163 301,169" fill="#f8c820" stroke="#b07a10" stroke-width="0.4"/><polygon points="292.5,164 301,169 301,175 293.5,170" fill="#4ab4e0"/><polygon points="301,169 309,163 308.5,169 301,175" fill="#1477aa"/><path d="M299.5,158 H308 L305,161.5 V165.5 L303,164.5 V161.5 Z" fill="#1e7ac0"/><g stroke="#a8abb0" fill="none" stroke-width="1"><circle cx="475" cy="161" r="1.8"/><circle cx="482" cy="161" r="1.8"/><path d="M471,161 h2 M477,161 h3 M484,161 h2"/><path d="M471,165.5 h15" stroke-width="1.6"/><path d="M477,170 h8 M477,172.5 h8" stroke-width="0.8" stroke-dasharray="1.5,0.8"/></g><g><path d="M497,164 A5.5,5.5 0 0 1 508,164 Z" fill="#cfd1d4"/><path d="M495,165.5 h15" stroke="#a8abb0" stroke-width="1.6"/><path d="M501,170 h8 M501,172.5 h8" stroke="#a8abb0" stroke-width="0.8" stroke-dasharray="1.5,0.8"/></g><rect x="518.5" y="157" width="1" height="18" fill="#fff"/><rect x="519.5" y="157" width="1" height="18" fill="#b4b8bd"/><rect x="525" y="160.0" width="6.5" height="3.6" fill="url(#ggray)"/><rect x="525" y="164.6" width="6.5" height="3.6" fill="url(#ggray)"/><rect x="525" y="169.2" width="6.5" height="3.6" fill="url(#ggray)"/><path d="M535,162 l0,9 l2.3,-2 l1.8,3.6 l1.5,-0.8 l-1.7,-3.4 l3,-0.3 z" fill="#e4e5e7" stroke="#c8cacd" stroke-width="0.4"/><path d="M528,160 l1.5,1.5 l3,-3.5 M528,164.6 l1.5,1.5 l3,-3.5 M528,169.2 l1.5,1.5 l3,-3.5" stroke="#a0a3a8" fill="none" stroke-width="0.9"/><rect x="549" y="160.0" width="6.5" height="3.6" fill="#1e9ad8"/><rect x="549" y="164.6" width="6.5" height="3.6" fill="#1e9ad8"/><rect x="549" y="169.2" width="6.5" height="3.6" fill="#1e9ad8"/><path d="M559,162 l0,9 l2.3,-2 l1.8,3.6 l1.5,-0.8 l-1.7,-3.4 l3,-0.3 z" fill="#f4f8fb" stroke="#c8cacd" stroke-width="0.4"/><path d="M552,160 l1.5,1.5 l3,-3.5 M552,164.6 l1.5,1.5 l3,-3.5" stroke="#28a038" fill="none" stroke-width="1.2"/><circle cx="554.5" cy="171.5" r="1.6" fill="#d8202a"/><rect x="573" y="160.0" width="6.5" height="3.6" fill="url(#ggray)"/><rect x="573" y="164.6" width="6.5" height="3.6" fill="url(#ggray)"/><rect x="573" y="169.2" width="6.5" height="3.6" fill="url(#ggray)"/><path d="M583,162 l0,9 l2.3,-2 l1.8,3.6 l1.5,-0.8 l-1.7,-3.4 l3,-0.3 z" fill="#e4e5e7" stroke="#c8cacd" stroke-width="0.4"/><path d="M601,159 l0,11 l2.8,-2.4 l2.2,4.4 l1.8,-1 l-2.1,-4.2 l3.7,-0.4 z" fill="#9a9da2"/><rect x="621" y="157" width="1" height="18" fill="#fff"/><rect x="622" y="157" width="1" height="18" fill="#b4b8bd"/><circle cx="636" cy="166" r="6" fill="none" stroke="#a8abb0" stroke-width="1.6" stroke-dasharray="4,2"/><path d="M633,161 l0,8 l2,-1.6 l1.6,3.2 l1.4,-0.7 l-1.5,-3.1 l2.7,-0.3 z" fill="#9a9da2"/><path d="M769,159 l0,11 l2.8,-2.4 l2.2,4.4 l1.8,-1 l-2.1,-4.2 l3.7,-0.4 z" fill="#aeb1b5"/><circle cx="776.5" cy="170" r="2.2" fill="#d4d6d9" stroke="#aeb1b5" stroke-width="0.5"/><path d="M791,164 l0,9 l2.3,-2 l1.8,3.6 l1.5,-0.8 l-1.7,-3.4 l3,-0.3 z" fill="#aeb1b5"/><circle cx="797" cy="161.5" r="2.6" fill="none" stroke="#aeb1b5" stroke-width="1.4" stroke-dasharray="1.5,1"/></svg>
<div class="t" style="left:6px;top:182.5px;color:#222">管理器</div>
<div class="a" style="left:0px;top:201px;width:300px;height:1px;background:#c6cace"></div>
<div class="a" style="left:33px;top:202px;width:266px;height:496px;background:#eef0f2;border:1px solid #c0c4c8"></div>
<div class="a" style="left:299px;top:202px;width:1px;height:500px;background:#eef0f2"></div>
<div class="a" style="left:300px;top:202px;width:1px;height:500px;background:#b4b8bd"></div>
<div class="a" style="left:301px;top:202px;width:2px;height:500px;background:#f2f3f4"></div>
<div class="a" style="left:33px;top:204px;width:132px;height:23px;background:#fff;border:1px solid #c0c4c8"></div>
<div class="t" style="left:38px;top:208px;color:#000">显示常用</div>
<div class="a" style="left:166px;top:204px;width:132px;height:23px;background:#fff;border:1px solid #c0c4c8"></div>
<div class="a" style="left:33px;top:228px;width:265px;height:361px;background:#fff;border:1px solid #b9bdc2"></div>
<div class="a" style="left:35px;top:230.5px;width:245px;height:18px;background:#f3f3f3"></div>
<div class="t" style="left:74px;top:232.5px;color:#111;font-size:12px">实体(9)</div>
<div class="t" style="left:107px;top:250.5px;color:#111;font-size:12px">S12(输入1)</div>
<div class="a" style="left:35px;top:266.5px;width:245px;height:18px;background:#f3f3f3"></div>
<div class="t" style="left:107px;top:268.5px;color:#111;font-size:12px">S16(输入1)</div>
<div class="t" style="left:107px;top:286.5px;color:#111;font-size:12px">S18(输入1)</div>
<div class="a" style="left:35px;top:302.5px;width:245px;height:18px;background:#f3f3f3"></div>
<div class="t" style="left:107px;top:304.5px;color:#111;font-size:12px">S22(输入1)</div>
<div class="t" style="left:107px;top:322.5px;color:#111;font-size:12px">S24(输入1)</div>
<div class="a" style="left:35px;top:338.5px;width:245px;height:18px;background:#f3f3f3"></div>
<div class="t" style="left:107px;top:340.5px;color:#111;font-size:12px">S25(输入1)</div>
<div class="t" style="left:107px;top:358.5px;color:#111;font-size:12px">S26(输入1)</div>
<div class="a" style="left:35px;top:374.5px;width:245px;height:18px;background:#f3f3f3"></div>
<div class="t" style="left:107px;top:376.5px;color:#111;font-size:12px">S14(组合1_添加)</div>
<div class="t" style="left:107px;top:394.5px;color:#111;font-size:12px">S29(拉伸1_基体)</div>
<div class="a" style="left:35px;top:410.5px;width:245px;height:18px;background:#f3f3f3"></div>
<div class="t" style="left:74px;top:412.5px;color:#111;font-size:12px">曲面(4)</div>
<div class="t" style="left:107px;top:430.5px;color:#111;font-size:12px">S19(输入1)</div>
<div class="a" style="left:35px;top:446.5px;width:245px;height:18px;background:#f3f3f3"></div>
<div class="t" style="left:107px;top:448.5px;color:#111;font-size:12px">S20(输入1)</div>
<div class="t" style="left:107px;top:466.5px;color:#111;font-size:12px">S21(输入1)</div>
<div class="a" style="left:35px;top:482.5px;width:245px;height:18px;background:#f3f3f3"></div>
<div class="t" style="left:107px;top:484.5px;color:#111;font-size:12px">S23(输入1)</div>
<div class="t" style="left:74px;top:502.5px;color:#111;font-size:12px">线框(1)</div>
<div class="a" style="left:35px;top:518.5px;width:245px;height:18px;background:#f3f3f3"></div>
<div class="t" style="left:74px;top:520.5px;color:#111;font-size:12px">历史</div>
<div class="t" style="left:107px;top:538.5px;color:#111;font-size:12px">静态数据</div>
<div class="a" style="left:35px;top:554.5px;width:245px;height:18px;background:#f3f3f3"></div>
<div class="t" style="left:88px;top:556.5px;color:#e8112d;font-size:12px;letter-spacing:0.65px">----- 建模停止 -----</div>
<div class="a" style="left:280px;top:230px;width:16px;height:357px;background:#dde1e7;"></div>
<div class="a" style="left:280px;top:265px;width:15px;height:305px;background:#eef0f4;border:1px solid #7d838b"></div>
<svg style="left:33px;top:228px" width="266" height="362" viewBox="33 228 266 362"><defs><linearGradient id="tFold" x1="0" y1="0" x2="0" y2="1"><stop offset="0" stop-color="#ffe650"/><stop offset="1" stop-color="#f9a61a"/></linearGradient></defs><path d="M46.200,237.5 V243.0 H40.200 Z" fill="#4a4a4a"/><path d="M55,236.5 h4 l1.500,-1.800 h6 v3 h-11.500 z" fill="#f9a61a" stroke="#d8480e" stroke-width="1"/><path d="M53.500,238.0 h11.500 l1.500,7.500 h-11.500 z" fill="url(#tFold)" stroke="#d8480e" stroke-width="1"/><rect x="66.500" y="252.5" width="12" height="12" fill="#fff" stroke="#1e1e1e" stroke-width="1"/><path d="M68.800,258.3 L71.600,262.0 L76.600,254.5" fill="none" stroke="#ee1111" stroke-width="1.800"/><polygon points="85,255.0 93,251.0 101,254.0 93,257.5" fill="#2aa4e0" stroke="#0a3a5a" stroke-width="0.400"/><polygon points="85,255.0 93,257.5 93,265.0 85.800,261.5" fill="#168cc8" stroke="#0a3a5a" stroke-width="0.400"/><polygon points="93,257.5 101,254.0 100.500,261.0 93,265.0" fill="#0a4e80" stroke="#0a3a5a" stroke-width="0.400"/><rect x="66.500" y="270.5" width="12" height="12" fill="#fff" stroke="#1e1e1e" stroke-width="1"/><path d="M68.800,276.3 L71.600,280.0 L76.600,272.5" fill="none" stroke="#ee1111" stroke-width="1.800"/><polygon points="85,273.0 93,269.0 101,272.0 93,275.5" fill="#2aa4e0" stroke="#0a3a5a" stroke-width="0.400"/><polygon points="85,273.0 93,275.5 93,283.0 85.800,279.5" fill="#168cc8" stroke="#0a3a5a" stroke-width="0.400"/><polygon points="93,275.5 101,272.0 100.500,279.0 93,283.0" fill="#0a4e80" stroke="#0a3a5a" stroke-width="0.400"/><rect x="66.500" y="288.5" width="12" height="12" fill="#fff" stroke="#1e1e1e" stroke-width="1"/><path d="M68.800,294.3 L71.600,298.0 L76.600,290.5" fill="none" stroke="#ee1111" stroke-width="1.800"/><polygon points="85,291.0 93,287.0 101,290.0 93,293.5" fill="#2aa4e0" stroke="#0a3a5a" stroke-width="0.400"/><polygon points="85,291.0 93,293.5 93,301.0 85.800,297.5" fill="#168cc8" stroke="#0a3a5a" stroke-width="0.400"/><polygon points="93,293.5 101,290.0 100.500,297.0 93,301.0" fill="#0a4e80" stroke="#0a3a5a" stroke-width="0.400"/><rect x="66.500" y="306.5" width="12" height="12" fill="#fff" stroke="#1e1e1e" stroke-width="1"/><path d="M68.800,312.3 L71.600,316.0 L76.600,308.5" fill="none" stroke="#ee1111" stroke-width="1.800"/><polygon points="85,309.0 93,305.0 101,308.0 93,311.5" fill="#2aa4e0" stroke="#0a3a5a" stroke-width="0.400"/><polygon points="85,309.0 93,311.5 93,319.0 85.800,315.5" fill="#168cc8" stroke="#0a3a5a" stroke-width="0.400"/><polygon points="93,311.5 101,308.0 100.500,315.0 93,319.0" fill="#0a4e80" stroke="#0a3a5a" stroke-width="0.400"/><rect x="66.500" y="324.5" width="12" height="12" fill="#fff" stroke="#1e1e1e" stroke-width="1"/><path d="M68.800,330.3 L71.600,334.0 L76.600,326.5" fill="none" stroke="#ee1111" stroke-width="1.800"/><polygon points="85,327.0 93,323.0 101,326.0 93,329.5" fill="#2aa4e0" stroke="#0a3a5a" stroke-width="0.400"/><polygon points="85,327.0 93,329.5 93,337.0 85.800,333.5" fill="#168cc8" stroke="#0a3a5a" stroke-width="0.400"/><polygon points="93,329.5 101,326.0 100.500,333.0 93,337.0" fill="#0a4e80" stroke="#0a3a5a" stroke-width="0.400"/><rect x="66.500" y="342.5" width="12" height="12" fill="#fff" stroke="#1e1e1e" stroke-width="1"/><path d="M68.800,348.3 L71.600,352.0 L76.600,344.5" fill="none" stroke="#ee1111" stroke-width="1.800"/><polygon points="85,345.0 93,341.0 101,344.0 93,347.5" fill="#2aa4e0" stroke="#0a3a5a" stroke-width="0.400"/><polygon points="85,345.0 93,347.5 93,355.0 85.800,351.5" fill="#168cc8" stroke="#0a3a5a" stroke-width="0.400"/><polygon points="93,347.5 101,344.0 100.500,351.0 93,355.0" fill="#0a4e80" stroke="#0a3a5a" stroke-width="0.400"/><rect x="66.500" y="360.5" width="12" height="12" fill="#fff" stroke="#1e1e1e" stroke-width="1"/><path d="M68.800,366.3 L71.600,370.0 L76.600,362.5" fill="none" stroke="#ee1111" stroke-width="1.800"/><polygon points="85,363.0 93,359.0 101,362.0 93,365.5" fill="#2aa4e0" stroke="#0a3a5a" stroke-width="0.400"/><polygon points="85,363.0 93,365.5 93,373.0 85.800,369.5" fill="#168cc8" stroke="#0a3a5a" stroke-width="0.400"/><polygon points="93,365.5 101,362.0 100.500,369.0 93,373.0" fill="#0a4e80" stroke="#0a3a5a" stroke-width="0.400"/><rect x="66.500" y="378.5" width="12" height="12" fill="#fff" stroke="#1e1e1e" stroke-width="1"/><path d="M68.800,384.3 L71.600,388.0 L76.600,380.5" fill="none" stroke="#ee1111" stroke-width="1.800"/><polygon points="85,381.0 93,377.0 101,380.0 93,383.5" fill="#2aa4e0" stroke="#0a3a5a" stroke-width="0.400"/><polygon points="85,381.0 93,383.5 93,391.0 85.800,387.5" fill="#168cc8" stroke="#0a3a5a" stroke-width="0.400"/><polygon points="93,383.5 101,380.0 100.500,387.0 93,391.0" fill="#0a4e80" stroke="#0a3a5a" stroke-width="0.400"/><rect x="66.500" y="396.5" width="12" height="12" fill="#fff" stroke="#1e1e1e" stroke-width="1"/><path d="M68.800,402.3 L71.600,406.0 L76.600,398.5" fill="none" stroke="#ee1111" stroke-width="1.800"/><polygon points="85,399.0 93,395.0 101,398.0 93,401.5" fill="#2aa4e0" stroke="#0a3a5a" stroke-width="0.400"/><polygon points="85,399.0 93,401.5 93,409.0 85.800,405.5" fill="#168cc8" stroke="#0a3a5a" stroke-width="0.400"/><polygon points="93,401.5 101,398.0 100.500,405.0 93,409.0" fill="#0a4e80" stroke="#0a3a5a" stroke-width="0.400"/><path d="M46.200,417.5 V423.0 H40.200 Z" fill="#4a4a4a"/><path d="M55,416.5 h4 l1.500,-1.800 h6 v3 h-11.500 z" fill="#f9a61a" stroke="#d8480e" stroke-width="1"/><path d="M53.500,418.0 h11.500 l1.500,7.500 h-11.500 z" fill="url(#tFold)" stroke="#d8480e" stroke-width="1"/><rect x="66.500" y="432.5" width="12" height="12" fill="#fff" stroke="#1e1e1e" stroke-width="1"/><path d="M68.800,438.3 L71.600,442.0 L76.600,434.5" fill="none" stroke="#ee1111" stroke-width="1.800"/><path d="M87,433.0 Q92,430.5 97,433.0 Q96,438.0 100.500,442.0 Q95,445.0 91,443.0 Q92,438.0 87,433.0 Z" fill="#1a8cd0" stroke="#0a4e80" stroke-width="0.700"/><rect x="66.500" y="450.5" width="12" height="12" fill="#fff" stroke="#1e1e1e" stroke-width="1"/><path d="M68.800,456.3 L71.600,460.0 L76.600,452.5" fill="none" stroke="#ee1111" stroke-width="1.800"/><path d="M87,451.0 Q92,448.5 97,451.0 Q96,456.0 100.500,460.0 Q95,463.0 91,461.0 Q92,456.0 87,451.0 Z" fill="#1a8cd0" stroke="#0a4e80" stroke-width="0.700"/><rect x="66.500" y="468.5" width="12" height="12" fill="#fff" stroke="#1e1e1e" stroke-width="1"/><path d="M68.800,474.3 L71.600,478.0 L76.600,470.5" fill="none" stroke="#ee1111" stroke-width="1.800"/><path d="M87,469.0 Q92,466.5 97,469.0 Q96,474.0 100.500,478.0 Q95,481.0 91,479.0 Q92,474.0 87,469.0 Z" fill="#1a8cd0" stroke="#0a4e80" stroke-width="0.700"/><rect x="66.500" y="486.5" width="12" height="12" fill="#fff" stroke="#1e1e1e" stroke-width="1"/><path d="M68.800,492.3 L71.600,496.0 L76.600,488.5" fill="none" stroke="#ee1111" stroke-width="1.800"/><path d="M87,487.0 Q92,484.5 97,487.0 Q96,492.0 100.500,496.0 Q95,499.0 91,497.0 Q92,492.0 87,487.0 Z" fill="#1a8cd0" stroke="#0a4e80" stroke-width="0.700"/><path d="M41.500,506.0 L45.500,510.0 L41.500,514.0 Z" fill="#fff" stroke="#8a8d92" stroke-width="0.9"/><path d="M54.500,505.0 h5 l1.500,1.500 h5.500 v9.500 h-12 z" fill="url(#tFold)" stroke="#d8600e" stroke-width="1"/><path d="M46.200,525.5 V531.0 H40.200 Z" fill="#4a4a4a"/><path d="M55,524.5 h4 l1.500,-1.800 h6 v3 h-11.500 z" fill="#f9a61a" stroke="#d8480e" stroke-width="1"/><path d="M53.500,526.0 h11.500 l1.500,7.500 h-11.500 z" fill="url(#tFold)" stroke="#d8480e" stroke-width="1"/><rect x="66.500" y="540.5" width="12" height="12" fill="#fff" stroke="#1e1e1e" stroke-width="1"/><path d="M68.800,546.3 L71.600,550.0 L76.600,542.5" fill="none" stroke="#1aa028" stroke-width="1.800"/><rect x="87" y="540.0" width="5.500" height="3" fill="#1a5a80"/><rect x="87" y="544.0" width="5.500" height="3" fill="#1a5a80"/><rect x="87" y="548.0" width="5.500" height="3" fill="#1a5a80"/><path d="M94.500,540.0 V551.0 M86,552.5 H98" stroke="#222" stroke-width="1.200" stroke-dasharray="2,1"/><path d="M66.500,564.0 L73.500,559.0 V562.0 H81 V566.0 H73.500 V569.0 Z" fill="#e8112d"/><path d="M154.5,213.5 H159.900 L157.200,216.700 Z" fill="#333"/><path d="M283,242 H292 L287.500,237 Z" fill="#4a4a4a"/><path d="M283,576 H292 L287.500,581 Z" fill="#4a4a4a"/><path d="M284.500,414 h7 M284.500,416.500 h7 M284.500,419 h7 M284.500,421.500 h7" stroke="#8a8d92" stroke-width="0.8"/></svg>
<svg style="left:0px;top:200px" width="34" height="240" viewBox="0 200 34 240"><path d="M31,201.500 H1.500 V246 H30.500" fill="#fff" stroke="#c0c4c8" stroke-width="1"/><rect x="30" y="202" width="1.500" height="43.500" fill="#fff"/><path d="M30.500,246 V700" stroke="#c6cace" stroke-width="1" fill="none"/><polygon points="5,215.500 11.500,212.200 18,215 11.500,218.500" fill="#c4ecf9" stroke="#5aa8cc" stroke-width="0.5"/><polygon points="5,215.500 11.500,218.500 11.500,224.500 5.500,221.500" fill="#8fd4f0" stroke="#5aa8cc" stroke-width="0.5"/><polygon points="11.500,218.500 18,215 17.800,221.300 11.500,224.500" fill="#52b0dc" stroke="#5aa8cc" stroke-width="0.5"/><path d="M11.500,226 V234.500 M11.500,230.700 H17 M19.500,222 H26" fill="none" stroke="#5a7a90" stroke-width="1.100"/><rect x="20" y="228.300" width="5.800" height="5" fill="#fff" stroke="#5a7a90" stroke-width="1.100"/><rect x="11.500" y="261" width="10" height="5.500" fill="#1ea8d8" stroke="#1a88b8" stroke-width="0.500"/><path d="M16.500,266.500 V272 M9.500,276.500 V272 H23 V276.500" fill="none" stroke="#6a8a9a" stroke-width="1"/><rect x="4.500" y="277" width="10" height="6.500" fill="#1ea8d8" stroke="#1a88b8" stroke-width="0.500"/><rect x="17.800" y="277.300" width="10" height="6" fill="#eaf6fc" stroke="#5ab4dc" stroke-width="0.800"/><rect x="5.500" y="308.500" width="21.500" height="22.500" fill="#eaf6fc" stroke="#5ab0dc" stroke-width="1"/><rect x="5.500" y="308.500" width="21.500" height="3.500" fill="#6ac0e8"/><polygon points="9.500,318.500 16.500,315.500 23.500,318.500 16.500,322" fill="#fbe04a" stroke="#c89a10" stroke-width="0.5"/><polygon points="9.500,318.500 16.500,322 16.500,329 9.500,325.500" fill="#f8c21c" stroke="#c89a10" stroke-width="0.5"/><polygon points="16.500,322 23.500,318.500 23.500,325.500 16.500,329" fill="#e89a14" stroke="#c89a10" stroke-width="0.5"/><rect x="4.500" y="356.500" width="23.500" height="23" fill="#bfe4f6" stroke="#3a9fd0" stroke-width="0.8"/><circle cx="21" cy="361.500" r="4" fill="#f8b820"/><path d="M4.500,379.500 V368 Q9,360 13,366 Q18,373 28,366 V379.500 Z" fill="#2a94cc"/><path d="M4,372 H11 V369 L16.500,373.500 L11,378 V375 H4 Z" fill="#f07a1a"/><circle cx="19.500" cy="410" r="4.500" fill="#f0a020"/><path d="M12,425 Q13,416 19.500,416 Q27,416 28,425 Z" fill="#f0a020"/><circle cx="13" cy="411.500" r="5.200" fill="#2a94cc" stroke="#fff" stroke-width="0.8"/><path d="M3.500,427 Q4.500,418 13,418 Q21.500,418 23,427 Z" fill="#2a94cc" stroke="#fff" stroke-width="0.8"/></svg>
<div class="a" style="left:33px;top:590px;width:265px;height:25px;background:#fdfdfd;border:1px solid #c0c4c8"></div>
<div class="t" style="left:53px;top:595px;font-weight:bold;color:#222">回放</div>
<div class="a" style="left:35px;top:616px;width:262px;height:78px;background:#e3e6e9;border:1px solid #c6cace"></div>
<svg style="left:33px;top:588px" width="270" height="114" viewBox="33 588 270 114"><path d="M38,600.5 H47.5 L42.7,608 Z" fill="#444"/><rect x="49.5" y="620.5" width="37" height="33" fill="#fdfdfd" stroke="#c4c8cc" stroke-width="1"/><rect x="88.5" y="620.5" width="37" height="33" fill="#ebebeb" stroke="#d8dadd" stroke-width="1"/><rect x="127.5" y="620.5" width="37" height="33" fill="#ebebeb" stroke="#d8dadd" stroke-width="1"/><rect x="166.5" y="620.5" width="37" height="33" fill="#ebebeb" stroke="#d8dadd" stroke-width="1"/><rect x="205.5" y="620.5" width="37" height="33" fill="#ebebeb" stroke="#d8dadd" stroke-width="1"/><rect x="244.5" y="620.5" width="37" height="33" fill="#ebebeb" stroke="#d8dadd" stroke-width="1"/><rect x="68.5" y="656.5" width="37" height="32" fill="#ebebeb" stroke="#d8dadd" stroke-width="1"/><rect x="107.5" y="656.5" width="37" height="32" fill="#ebebeb" stroke="#d8dadd" stroke-width="1"/><rect x="146.5" y="656.5" width="37" height="32" fill="#ebebeb" stroke="#d8dadd" stroke-width="1"/><rect x="185.5" y="656.5" width="37" height="32" fill="#ebebeb" stroke="#d8dadd" stroke-width="1"/><rect x="224.5" y="656.5" width="37" height="32" fill="#ebebeb" stroke="#d8dadd" stroke-width="1"/><path d="M63,631.500 L73,637 L63,642.500 Z" fill="#2aa8e0"/><path d="M63,631.500 L66,637 L63,642.500 Z" fill="#8fd4f4"/><path d="M100.5,632.0 L109.5,637 L100.5,642.0 Z" fill="#c4c6c9" stroke="#9a9da2" stroke-width="0.7"/><rect x="110.5" y="631.500" width="2.500" height="11" fill="#9a9da2"/><path d="M142.5,632.0 L151.5,637 L142.5,642.0 Z" fill="#c4c6c9" stroke="#9a9da2" stroke-width="0.7"/><path d="M138.500,630.500 Q134.500,637 138.500,643.500 M155.500,630.500 Q159.500,637 155.500,643.500" fill="none" stroke="#9a9da2" stroke-width="1.600"/><path d="M181,632.0 L190,637 L181,642.0 Z" fill="#c4c6c9" stroke="#9a9da2" stroke-width="0.7"/><rect x="190.500" y="631.500" width="2.500" height="11" fill="#9a9da2"/><path d="M178.500,630.500 Q174.500,637 178.500,643.500 M194.500,630.500 Q198.500,637 194.500,643.500" fill="none" stroke="#9a9da2" stroke-width="1.600"/><path d="M215,632.5 L223,637 L215,641.5 Z" fill="#c4c6c9" stroke="#9a9da2" stroke-width="0.7"/><path d="M223,632.5 L231,637 L223,641.5 Z" fill="#c4c6c9" stroke="#9a9da2" stroke-width="0.7"/><path d="M263,632.5 L255,637 L263,641.5 Z" fill="#c4c6c9" stroke="#9a9da2" stroke-width="0.7"/><path d="M271,632.5 L263,637 L271,641.5 Z" fill="#c4c6c9" stroke="#9a9da2" stroke-width="0.7"/><g fill="none" stroke="#9a9da2" stroke-width="1.500"><ellipse cx="82" cy="678" rx="4" ry="2.600" transform="rotate(-45 82 678)"/><ellipse cx="91.500" cy="668.500" rx="4" ry="2.600" transform="rotate(-45 91.500 668.500)"/><path d="M78,682 l-2.500,2.500 M95,665 l2.500,-2.500 M85,672 l3,3 M88,670 l1.500,-3"/></g><path d="M119.500,683.500 L122,677 L135,663 L138,666 L125,680.500 Z" fill="#d4d6d9" stroke="#9a9da2" stroke-width="0.900"/><path d="M119.500,683.500 L122,677 L125,680.500 Z" fill="#9a9da2"/><circle cx="162.500" cy="667" r="2.200" fill="#9a9da2"/><path d="M162,669.500 L160,676 L164,680 L163,684 M160,676 L156,680 L154,684 M162,671 L167,673.500 M161.500,671 L157,674" fill="none" stroke="#9a9da2" stroke-width="1.800"/><rect x="167.500" y="668.500" width="9" height="5.500" fill="#d4d6d9" stroke="#9a9da2" stroke-width="0.700"/><path d="M196,664 L211,680 M211,664 L196,680" stroke="#777a7f" stroke-width="3.6"/><rect x="235" y="664.500" width="16" height="15.500" fill="#a8abb0"/><path d="M235,664.500 H251 V668 Q243,668 235,673 Z" fill="#c4c6c9"/></svg>
<div class="a" style="left:303px;top:203px;width:857px;height:1px;background:#c0c4c8"></div>
<div class="a" style="left:305px;top:180px;width:115px;height:25px;background:#fff;border:1px solid #c6cace;border-bottom:none"></div>
<div class="t" style="left:336.5px;top:185px;font-size:12.5px;color:#111">D.Z3 - [d]</div>
<div class="t" style="left:454px;top:185px;font-size:12.3px;color:#111">零件001.Z3 - [零件001_2D]</div>
<div class="a" style="left:303px;top:204px;width:857px;height:493px;background:#fff"></div>
<div class="a" style="left:306px;top:181px;width:113px;height:25px;background:#fff"></div>
<div class="t" style="left:336.5px;top:185px;font-size:12.5px;color:#111">D.Z3 - [d]</div>
<svg style="left:0px;top:180px" width="1160" height="26" viewBox="0 180 1160 26"><rect x="265.5" y="188.5" width="8" height="6" rx="1" fill="#fff" stroke="#8a8d92" stroke-width="1"/><rect x="267.5" y="190.5" width="4" height="2" fill="#b4b7bb"/><path d="M285,187.500 L292.500,194.500 M292.500,187.500 L285,194.500" stroke="#8a8d92" stroke-width="4.400" stroke-linecap="square"/><path d="M285,187.500 L292.500,194.500 M292.500,187.500 L285,194.500" stroke="#fff" stroke-width="2.600" stroke-linecap="square"/><path d="M397.5,188.5 L405.5,196.5 M405.5,188.5 L397.5,196.5" stroke="#8a6a20" stroke-width="1.4"/><path d="M610,188.5 L618,196.5 M618,188.5 L610,196.5" stroke="#8a6a20" stroke-width="1.4"/><path d="M641,193 H651 M646,188 V198" stroke="#8a8088" stroke-width="1.5"/><path d="M320,193 H330 M325,188 V198" stroke="#5a4a10" stroke-width="1.6"/></svg>
<svg style="left:0px;top:204px" width="1160" height="30" viewBox="0 204 1160 30"><defs>
<linearGradient id="vb1" x1="0" y1="0" x2="1" y2="1"><stop offset="0" stop-color="#2a9ad0"/><stop offset="1" stop-color="#0a4a78"/></linearGradient>
<linearGradient id="vmon" x1="0" y1="0" x2="0" y2="1"><stop offset="0" stop-color="#4a5a78"/><stop offset="1" stop-color="#b8c0cc"/></linearGradient>
</defs><path d="M470,212.5 H479 V225.5 H470" fill="none" stroke="#123f6a" stroke-width="2.2"/><path d="M464,219 L470,213.5 V217 H476 V221 H470 V224.5 Z" fill="#e8141e"/><path d="M490,220 L494,213 L506,214.5 L507.5,224 L497,226.5 Z" fill="#1f6fa8"/><path d="M492,217 L495,212.5 L505,214 L503,219 Z" fill="#5ab4e4"/><path d="M491,219 L498,220 L497,226 L489.5,224 Z" fill="#f4f4f4" stroke="#999" stroke-width="0.4"/><path d="M491.5,220.5 l5,0.8 M491,222.3 l5,0.8" stroke="#d04040" stroke-width="0.8"/><path d="M514,217 h5 l-2.5,3 z" fill="#333"/><g transform="rotate(-42 536 219)"><rect x="527" y="216" width="6" height="6.5" rx="1.5" fill="#d8202a"/><rect x="533" y="216" width="5" height="6.5" fill="#f4f4f4" stroke="#aaa" stroke-width="0.3"/><rect x="538" y="216" width="8" height="6.5" rx="1" fill="#f0c838"/></g><polygon points="553,217 563,213 572,216.5 562,221" fill="#f8d830" stroke="#c8a010" stroke-width="0.4"/><polygon points="553,217 562,221 562,227 553.5,223" fill="#bfe2f4"/><polygon points="562,221 572,216.5 571.5,222.5 562,227" fill="#3a9fd0"/><path d="M562.5,217 V211" stroke="#28a038" stroke-width="1.2"/><path d="M560.8,212 L562.5,209.5 L564.2,212 Z" fill="#28a038"/><polygon points="579,214.5 590,210.5 598.5,213.5 588,218" fill="#5cc0ea"/><polygon points="579,214.5 588,218 588,227.5 580,223.5" fill="#9dd4f0"/><polygon points="588,218 598.5,213.5 598,222 588,227.5" fill="url(#vb1)"/><path d="M604,217 h5 l-2.5,3 z" fill="#333"/><g fill="#fff" stroke="#8cb4cc" stroke-width="0.9"><polygon points="616,214.5 627,210.5 636,213.5 626,218"/><polygon points="616,214.5 626,218 626,227.5 617,223.5"/><polygon points="626,218 636,213.5 635.5,222 626,227.5"/></g><path d="M641.5,217 h5 l-2.5,3 z" fill="#333"/><rect x="656" y="211" width="16.5" height="15.5" fill="#1e9ad8" stroke="#0f5a8a" stroke-width="0.8"/><path d="M664.5,211 V218.5 H672.5" fill="none" stroke="#0f5a8a" stroke-width="0.9"/><path d="M680,217 h5 l-2.5,3 z" fill="#333"/><rect x="693" y="210" width="17.5" height="17.5" fill="#38a8e0"/><rect x="694.5" y="211.5" width="14.5" height="14.5" fill="#cfe8f6"/><rect x="698" y="214" width="7" height="9" fill="#fff" stroke="#aaa" stroke-width="0.4"/><circle cx="701.5" cy="218.5" r="6" fill="none" stroke="#f0b820" stroke-width="1.8"/><path d="M706,223.5 L710,227.5" stroke="#1f6fa8" stroke-width="1.8"/><path d="M717,217 h5 l-2.5,3 z" fill="#333"/><rect x="731.5" y="211.5" width="16" height="15" fill="#f4f9fc" stroke="#8cc0e0" stroke-width="1"/><rect x="734" y="221" width="4" height="3.5" fill="#3a9fd0"/><path d="M740,224 Q745.5,223 745,216" fill="none" stroke="#8cc0e0" stroke-width="0.8"/><circle cx="744.5" cy="214.5" r="1.2" fill="#8cc0e0"/><path d="M760,210.5 V224 M772.5,210.5 V224" stroke="#2a8ac8" stroke-width="1.6"/><path d="M761,216.5 H771.5" stroke="#2a8ac8" stroke-width="1.2"/><path d="M760,226.3 H772.5" stroke="#d8202a" stroke-width="1.3"/><path d="M759.5,226.3 l2.5,-1.6 v3.2 z M773,226.3 l-2.5,-1.6 v3.2 z" fill="#d8202a"/><path d="M781,217 h5 l-2.5,3 z" fill="#333"/><rect x="795" y="210.5" width="18" height="13" fill="#a8acb2" stroke="#7a7e84" stroke-width="0.6"/><rect x="796.5" y="212" width="15" height="10" fill="url(#vmon)"/><path d="M799,226.5 Q804,224 809,226.5 Z" fill="#8a8e94"/><rect x="798" y="226.3" width="12" height="1.2" fill="#8a8e94"/><path d="M819.5,217 h5 l-2.5,3 z" fill="#333"/><rect x="834" y="215" width="17" height="7.5" fill="#000"/><rect x="860.5" y="211.5" width="16" height="15" fill="#c8e8f8" stroke="#2a1a1a" stroke-width="1"/><polygon points="885,217 896,212 903.5,215.5 892,221" fill="#2ab8b8"/><polygon points="885,217 892,221 892,226 885.5,222" fill="#1a8a9a"/><polygon points="892,221 903.5,215.5 903,220.5 892,226" fill="#147888"/><path d="M885,219.5 L892,223.5 L903.5,218" fill="none" stroke="#7fe0e0" stroke-width="0.6"/><path d="M910,217 h5 l-2.5,3 z" fill="#333"/><path d="M920.5,207 V228.5 H1160" fill="none" stroke="#c0c4c8" stroke-width="1"/><path d="M932,211.5 C928,211.5 927,216 929.5,218.5 L930,221.5 H934 L934.5,218.5 C937,216 936,211.5 932,211.5 Z" fill="#fdf3a8" stroke="#b89a20" stroke-width="0.8"/><rect x="930.2" y="222" width="3.6" height="2.8" fill="#5a5a6a"/><circle cx="949.5" cy="218.5" r="6" fill="#f8e24a" stroke="#3a78b8" stroke-width="1"/><path d="M943,212 h2 M954,212 h2 M943,225 h2 M954,225 h2" stroke="#e8a820" stroke-width="1"/></svg>
<div class="t" style="left:960px;top:210.5px;font-size:12px;color:#111">CHILUN2_BODY</div>
<svg style="left:0px;top:0px" width="1160" height="702" viewBox="0 0 1160 702">
<defs>
<linearGradient id="gBody" gradientUnits="userSpaceOnUse" x1="370" y1="0" x2="678" y2="0"><stop offset="0" stop-color="#7a6540"/><stop offset="0.06" stop-color="#94794e"/><stop offset="0.153" stop-color="#b09464"/><stop offset="0.217" stop-color="#d8c298"/><stop offset="0.253" stop-color="#fffdf6"/><stop offset="0.346" stop-color="#fffdf6"/><stop offset="0.373" stop-color="#f0dfb8"/><stop offset="0.43" stop-color="#c0a676"/><stop offset="0.484" stop-color="#a88e5e"/><stop offset="0.614" stop-color="#98805a"/><stop offset="0.706" stop-color="#a3906c"/><stop offset="0.8" stop-color="#7e6a48"/><stop offset="0.89" stop-color="#5e4c30"/><stop offset="0.96" stop-color="#4a3a22"/><stop offset="1" stop-color="#3e3020"/></linearGradient>
<linearGradient id="gBoss" gradientUnits="userSpaceOnUse" x1="442" y1="0" x2="606" y2="0">
<stop offset="0" stop-color="#6e5b3a"/><stop offset="0.1" stop-color="#a68b5c"/><stop offset="0.24" stop-color="#c9b184"/>
<stop offset="0.33" stop-color="#fffaf0"/><stop offset="0.40" stop-color="#fff8e8"/><stop offset="0.48" stop-color="#d9c69a"/><stop offset="0.58" stop-color="#a68b5c"/><stop offset="0.72" stop-color="#bda67a"/>
<stop offset="0.83" stop-color="#7b6745"/><stop offset="1" stop-color="#4f3f26"/>
</linearGradient>
<linearGradient id="gLug" gradientUnits="userSpaceOnUse" x1="377" y1="0" x2="438" y2="0">
<stop offset="0" stop-color="#8d7650"/><stop offset="0.25" stop-color="#b89d6e"/><stop offset="0.5" stop-color="#fff8e6"/><stop offset="0.75" stop-color="#b89d6e"/><stop offset="1" stop-color="#7b6745"/>
</linearGradient>
<linearGradient id="gLug2" gradientUnits="userSpaceOnUse" x1="616" y1="0" x2="671" y2="0">
<stop offset="0" stop-color="#6e5b3a"/><stop offset="0.12" stop-color="#a68b5c"/><stop offset="0.27" stop-color="#fff4da"/><stop offset="0.42" stop-color="#c9b184"/><stop offset="0.6" stop-color="#a68b5c"/><stop offset="0.8" stop-color="#b89d6e"/><stop offset="0.92" stop-color="#6e5b3a"/><stop offset="1" stop-color="#4f3f26"/>
</linearGradient>
<linearGradient id="gArmF" gradientUnits="userSpaceOnUse" x1="579" y1="0" x2="617" y2="0">
<stop offset="0" stop-color="#a68b5c"/><stop offset="0.35" stop-color="#c9b184"/><stop offset="0.65" stop-color="#fff0d0"/><stop offset="0.85" stop-color="#9a8158"/><stop offset="1" stop-color="#6e5b3a"/>
</linearGradient>
<radialGradient id="gArmT" gradientUnits="userSpaceOnUse" cx="591" cy="455" r="26" gradientTransform="translate(0,227.500) scale(1,0.5)">
<stop offset="0" stop-color="#fffaf0"/><stop offset="0.4" stop-color="#e8d9b5"/><stop offset="1" stop-color="#b1986b"/>
</radialGradient>
<linearGradient id="gBase" gradientUnits="userSpaceOnUse" x1="364" y1="0" x2="690" y2="0">
<stop offset="0" stop-color="#a9a8d6"/><stop offset="0.12" stop-color="#b7b6e0"/><stop offset="0.17" stop-color="#dcdcf4"/><stop offset="0.22" stop-color="#ffffff"/><stop offset="0.34" stop-color="#ffffff"/><stop offset="0.44" stop-color="#d8d8f2"/>
<stop offset="0.6" stop-color="#b9b8e2"/><stop offset="0.8" stop-color="#a5a4d2"/><stop offset="1" stop-color="#8d8cb8"/>
</linearGradient>
<linearGradient id="gShaft" gradientUnits="userSpaceOnUse" x1="503" y1="0" x2="544" y2="0">
<stop offset="0" stop-color="#053d08"/><stop offset="0.18" stop-color="#0a5f10"/><stop offset="0.36" stop-color="#2fa836"/><stop offset="0.45" stop-color="#66d46a"/><stop offset="0.58" stop-color="#128018"/><stop offset="0.8" stop-color="#0a5a10"/><stop offset="1" stop-color="#043207"/>
</linearGradient>
<linearGradient id="gFillet" gradientUnits="userSpaceOnUse" x1="0" y1="470" x2="0" y2="500">
<stop offset="0" stop-color="#b1986b"/><stop offset="0.5" stop-color="#efe2c0"/><stop offset="1" stop-color="#b1986b" stop-opacity="0"/>
</linearGradient>
<linearGradient id="gHole" gradientUnits="userSpaceOnUse" x1="394" y1="0" x2="422" y2="0">
<stop offset="0" stop-color="#5a482c"/><stop offset="0.5" stop-color="#f3e6c6"/><stop offset="1" stop-color="#6e5b3a"/>
</linearGradient>
<linearGradient id="gHole2" gradientUnits="userSpaceOnUse" x1="625" y1="0" x2="653" y2="0">
<stop offset="0" stop-color="#5a482c"/><stop offset="0.5" stop-color="#f3e6c6"/><stop offset="1" stop-color="#6e5b3a"/>
</linearGradient>
<linearGradient id="gConn" gradientUnits="userSpaceOnUse" x1="640" y1="650" x2="690" y2="700">
<stop offset="0" stop-color="#c9c9ec"/><stop offset="0.5" stop-color="#ffffff"/><stop offset="1" stop-color="#b5b4de"/>
</linearGradient>
<linearGradient id="gTop" gradientUnits="userSpaceOnUse" x1="370" y1="0" x2="678" y2="0">
<stop offset="0" stop-color="#8a7450"/><stop offset="0.1" stop-color="#b1986b"/><stop offset="0.8" stop-color="#b1986b"/><stop offset="0.9" stop-color="#8a7450"/><stop offset="1" stop-color="#5c4a2e"/>
</linearGradient>
<linearGradient id="gFil" gradientUnits="userSpaceOnUse" x1="380" y1="0" x2="678" y2="0">
<stop offset="0" stop-color="#a98f62"/><stop offset="0.2" stop-color="#b89d6e"/><stop offset="0.38" stop-color="#dccaa0"/><stop offset="0.52" stop-color="#f8ecd0"/><stop offset="0.64" stop-color="#d9c69a"/>
<stop offset="0.78" stop-color="#b1986b"/><stop offset="0.9" stop-color="#8a7450"/><stop offset="1" stop-color="#5c4a2e"/>
</linearGradient>
</defs>
<path d="M366,562 L366,580 L370,600 L377,620 L389,640 L404,655 Q419,668 436,675 Q480,690 526,692 Q560,692 584,687 L604,682 L604,620 L684,570 L682,562 Z" fill="url(#gBase)" stroke="#1c1b30" stroke-width="0.9"/>
<path d="M404,655 Q419,668 436,675 Q480,690 526,692 Q560,692 584,687 L584,681 Q560,686 526,686 Q480,684 438,669 Q420,661 405,648 Z" fill="#a3a2d0" stroke="#55547c" stroke-width="0.5"/>
<path d="M366,562 L366,580 L370,600 L377,620 L389,640 L404,655 L405,652 L405,600 Z" fill="#a9a8d6"/>
<path d="M405,627 L405,654" stroke="#3c3b5c" stroke-width="0.8" fill="none"/>
<path d="M582,647 L582,687 M588,646 L588,686" stroke="#55547c" stroke-width="0.8" fill="none"/>
<path d="M368,590 A158,79 0 0 0 588,647" stroke="#3c3b5c" stroke-width="0.8" fill="none"/>
<path d="M367,581 A158,79 0 0 0 600,637" stroke="#55547c" stroke-width="0.6" fill="none"/>
<path d="M432,636 L441,639 M446,641 L449,642" stroke="#2030ff" stroke-width="1" fill="none"/>
<path d="M655,600 L683.3,576.5 L705.4,582.8 L708.6,589 L637.4,637 L602.6,635 Z" fill="#b0b0dc" stroke="#15142a" stroke-width="1.05"/>
<path d="M602.6,635.5 L629.5,643 L629.5,688 L602.6,680 Z" fill="#f6f6fd" stroke="#15142a" stroke-width="1.05"/>
<path d="M629.5,643 L636,645 L636,690 L629.5,688 Z" fill="#c9c9ec" stroke="#15142a" stroke-width="1.05"/>
<path d="M628,642 Q631,636 637.4,636.5 L700.7,590.7 L711,593 L712,598 L646,647 Q641,651 641,660 L641,689 L634,686 L634,650 Q633,646 628,642 Z" fill="#a3a2d0" stroke="#15142a" stroke-width="1.05"/>
<path d="M711,598.6 L765.6,617.2 L704.5,664 L699.2,669.8 L643,645 Z" fill="#a9a8d8" stroke="#15142a" stroke-width="1.05"/>
<path d="M643,645 L699.2,669.8 L699.2,695 L643,671 Z" fill="url(#gConn)" stroke="#15142a" stroke-width="1.05"/>
<path d="M643,653 L699.2,678" stroke="#7d7ca8" stroke-width="0.7"/>
<path d="M704.5,664 L765.6,617.2 Q769,618 769.7,622 L769.5,648 L706,695.5 L700,694.5 Q699,690 699,672 Q700,667 704.5,664 Z" fill="#50506a" stroke="#15142a" stroke-width="1.05"/>
<path d="M761.2,643.6 l17,4.500 l-2.200,2.600 l-17,-4.500 z" fill="#dcdcf6" stroke="#1c1b30" stroke-width="0.7"/>
<path d="M759.0,646.2 l17,4.500 l0,1.300 l-17,-4.500 z" fill="#2c2c40"/>
<path d="M754.8,648.6 l17,4.500 l-2.200,2.600 l-17,-4.500 z" fill="#dcdcf6" stroke="#1c1b30" stroke-width="0.7"/>
<path d="M752.6,651.2 l17,4.500 l0,1.300 l-17,-4.500 z" fill="#2c2c40"/>
<path d="M748.4,653.6 l17,4.500 l-2.200,2.600 l-17,-4.500 z" fill="#dcdcf6" stroke="#1c1b30" stroke-width="0.7"/>
<path d="M746.2,656.2 l17,4.500 l0,1.300 l-17,-4.500 z" fill="#2c2c40"/>
<path d="M742.0,658.6 l17,4.500 l-2.200,2.600 l-17,-4.500 z" fill="#dcdcf6" stroke="#1c1b30" stroke-width="0.7"/>
<path d="M739.8,661.2 l17,4.500 l0,1.300 l-17,-4.500 z" fill="#2c2c40"/>
<path d="M735.6,663.6 l17,4.500 l-2.200,2.600 l-17,-4.500 z" fill="#dcdcf6" stroke="#1c1b30" stroke-width="0.7"/>
<path d="M733.4,666.2 l17,4.500 l0,1.300 l-17,-4.500 z" fill="#2c2c40"/>
<path d="M729.2,668.6 l17,4.500 l-2.200,2.600 l-17,-4.500 z" fill="#dcdcf6" stroke="#1c1b30" stroke-width="0.7"/>
<path d="M727.0,671.2 l17,4.500 l0,1.300 l-17,-4.500 z" fill="#2c2c40"/>
<path d="M722.8,673.6 l17,4.500 l-2.200,2.600 l-17,-4.500 z" fill="#dcdcf6" stroke="#1c1b30" stroke-width="0.7"/>
<path d="M720.6,676.2 l17,4.500 l0,1.300 l-17,-4.500 z" fill="#2c2c40"/>
<path d="M716.4,678.6 l17,4.500 l-2.200,2.600 l-17,-4.500 z" fill="#dcdcf6" stroke="#1c1b30" stroke-width="0.7"/>
<path d="M714.2,681.2 l17,4.500 l0,1.300 l-17,-4.500 z" fill="#2c2c40"/>
<path d="M710.0,683.6 l17,4.500 l-2.200,2.600 l-17,-4.500 z" fill="#dcdcf6" stroke="#1c1b30" stroke-width="0.7"/>
<path d="M707.8,686.2 l17,4.500 l0,1.300 l-17,-4.500 z" fill="#2c2c40"/>
<path d="M703.6,688.6 l17,4.500 l-2.200,2.600 l-17,-4.500 z" fill="#dcdcf6" stroke="#1c1b30" stroke-width="0.7"/>
<path d="M701.4,691.2 l17,4.500 l0,1.300 l-17,-4.500 z" fill="#2c2c40"/>
<path d="M754,634.2 l11.600,-8.300 l13.100,4.600 l-10.900,8.500 Z" fill="#c0c0ec" stroke="#1c1b30" stroke-width="0.8"/>
<path d="M754,634.2 l13.800,4.800 l0,2 l-13.800,-4.800 Z" fill="#f4f4ff" stroke="#1c1b30" stroke-width="0.5"/>
<path d="M728.5,653 l11.600,-8.300 l13.100,4.600 l-10.900,8.500 Z" fill="#c0c0ec" stroke="#1c1b30" stroke-width="0.8"/>
<path d="M728.5,653 l13.800,4.800 l0,2 l-13.800,-4.800 Z" fill="#f4f4ff" stroke="#1c1b30" stroke-width="0.5"/>
<path d="M703.4,672.4 l11.600,-8.300 l13.100,4.600 l-10.900,8.500 Z" fill="#c0c0ec" stroke="#1c1b30" stroke-width="0.8"/>
<path d="M703.4,672.4 l13.800,4.800 l0,2 l-13.800,-4.800 Z" fill="#f4f4ff" stroke="#1c1b30" stroke-width="0.5"/>
<path d="M676,490 L686,501 L686,547 L676,540 Z" fill="#b5b4de" stroke="#3c3b5c" stroke-width="0.7"/>
<path d="M370.5,404 L370.5,537 Q370,552 366,562 A158,79 0 0 0 682,562 Q678,552 677.5,537 L677.5,404 Z" fill="url(#gBody)" stroke="#15100a" stroke-width="1.05"/>
<path d="M366,562 A158,79 0 0 0 682,562 L680,556 A156,78 0 0 1 368,556 Z" fill="#cbb78a" stroke="#1a1408" stroke-width="0.8"/>
<ellipse cx="524" cy="404" rx="153.5" ry="81.5" fill="url(#gTop)"/>
<path d="M370.5,404 A153.5,81.5 0 0 1 677.5,404" fill="none" stroke="#15100a" stroke-width="1.05"/>
<defs><linearGradient id="gF0" gradientUnits="userSpaceOnUse" x1="370" y1="0" x2="678" y2="0"><stop offset="0.000" stop-color="#7a6540"/><stop offset="0.060" stop-color="#94794e"/><stop offset="0.153" stop-color="#b09464"/><stop offset="0.217" stop-color="#d8c298"/><stop offset="0.253" stop-color="#fffdf6"/><stop offset="0.346" stop-color="#fffdf6"/><stop offset="0.373" stop-color="#f0dfb8"/><stop offset="0.430" stop-color="#c0a676"/><stop offset="0.484" stop-color="#a88e5e"/><stop offset="0.614" stop-color="#98805a"/><stop offset="0.706" stop-color="#a3906c"/><stop offset="0.800" stop-color="#7e6a48"/><stop offset="0.890" stop-color="#5e4c30"/><stop offset="0.960" stop-color="#4a3a22"/><stop offset="1.000" stop-color="#3e3020"/></linearGradient><linearGradient id="gF1" gradientUnits="userSpaceOnUse" x1="370" y1="0" x2="678" y2="0"><stop offset="0.000" stop-color="#7b6641"/><stop offset="0.112" stop-color="#957a4f"/><stop offset="0.239" stop-color="#b09464"/><stop offset="0.303" stop-color="#d6c096"/><stop offset="0.339" stop-color="#fcf9f1"/><stop offset="0.432" stop-color="#fcf9f1"/><stop offset="0.459" stop-color="#eddcb5"/><stop offset="0.516" stop-color="#bfa575"/><stop offset="0.570" stop-color="#a88e5e"/><stop offset="0.697" stop-color="#98805a"/><stop offset="0.769" stop-color="#a3906b"/><stop offset="0.843" stop-color="#7f6b49"/><stop offset="0.914" stop-color="#604e32"/><stop offset="0.969" stop-color="#4d3d24"/><stop offset="1.000" stop-color="#423322"/></linearGradient><linearGradient id="gF2" gradientUnits="userSpaceOnUse" x1="370" y1="0" x2="678" y2="0"><stop offset="0.000" stop-color="#7f6a44"/><stop offset="0.138" stop-color="#977c51"/><stop offset="0.284" stop-color="#b09464"/><stop offset="0.348" stop-color="#d3bd93"/><stop offset="0.384" stop-color="#f6f2e6"/><stop offset="0.477" stop-color="#f6f2e6"/><stop offset="0.504" stop-color="#e9d7af"/><stop offset="0.561" stop-color="#bea474"/><stop offset="0.615" stop-color="#a88f5f"/><stop offset="0.740" stop-color="#9a825b"/><stop offset="0.802" stop-color="#a4906b"/><stop offset="0.865" stop-color="#836f4b"/><stop offset="0.926" stop-color="#675436"/><stop offset="0.973" stop-color="#554429"/><stop offset="1.000" stop-color="#4a3b28"/></linearGradient><linearGradient id="gF3" gradientUnits="userSpaceOnUse" x1="370" y1="0" x2="678" y2="0"><stop offset="0.000" stop-color="#856f48"/><stop offset="0.160" stop-color="#9a7f54"/><stop offset="0.320" stop-color="#b09465"/><stop offset="0.384" stop-color="#cfb98e"/><stop offset="0.420" stop-color="#eee7d9"/><stop offset="0.513" stop-color="#eee7d9"/><stop offset="0.540" stop-color="#e2d0a7"/><stop offset="0.597" stop-color="#bca373"/><stop offset="0.651" stop-color="#a99060"/><stop offset="0.775" stop-color="#9d845d"/><stop offset="0.828" stop-color="#a5916b"/><stop offset="0.883" stop-color="#88734f"/><stop offset="0.936" stop-color="#6f5b3c"/><stop offset="0.977" stop-color="#5f4d31"/><stop offset="1.000" stop-color="#55452f"/></linearGradient><linearGradient id="gF4" gradientUnits="userSpaceOnUse" x1="370" y1="0" x2="678" y2="0"><stop offset="0.000" stop-color="#8c754e"/><stop offset="0.179" stop-color="#9d8357"/><stop offset="0.351" stop-color="#b09566"/><stop offset="0.415" stop-color="#cbb489"/><stop offset="0.451" stop-color="#e5dbc8"/><stop offset="0.544" stop-color="#e5dbc8"/><stop offset="0.571" stop-color="#dbc79e"/><stop offset="0.628" stop-color="#bba172"/><stop offset="0.682" stop-color="#aa9162"/><stop offset="0.805" stop-color="#a0875f"/><stop offset="0.851" stop-color="#a7926b"/><stop offset="0.899" stop-color="#8e7953"/><stop offset="0.944" stop-color="#796543"/><stop offset="0.980" stop-color="#6b593a"/><stop offset="1.000" stop-color="#635238"/></linearGradient><linearGradient id="gF5" gradientUnits="userSpaceOnUse" x1="370" y1="0" x2="678" y2="0"><stop offset="0.000" stop-color="#937d54"/><stop offset="0.196" stop-color="#a1875b"/><stop offset="0.379" stop-color="#b09567"/><stop offset="0.443" stop-color="#c5ae82"/><stop offset="0.479" stop-color="#dacdb4"/><stop offset="0.572" stop-color="#dacdb4"/><stop offset="0.599" stop-color="#d2bd93"/><stop offset="0.656" stop-color="#b89f70"/><stop offset="0.710" stop-color="#ac9264"/><stop offset="0.832" stop-color="#a38b62"/><stop offset="0.872" stop-color="#a9936b"/><stop offset="0.913" stop-color="#967f58"/><stop offset="0.952" stop-color="#856f4b"/><stop offset="0.983" stop-color="#7a6644"/><stop offset="1.000" stop-color="#746143"/></linearGradient><linearGradient id="gF6" gradientUnits="userSpaceOnUse" x1="370" y1="0" x2="678" y2="0"><stop offset="0.000" stop-color="#9c855b"/><stop offset="0.211" stop-color="#a68c60"/><stop offset="0.405" stop-color="#b09668"/><stop offset="0.469" stop-color="#bfa77b"/><stop offset="0.505" stop-color="#cdbd9e"/><stop offset="0.598" stop-color="#cdbd9e"/><stop offset="0.625" stop-color="#c8b287"/><stop offset="0.682" stop-color="#b69d6f"/><stop offset="0.736" stop-color="#ad9466"/><stop offset="0.858" stop-color="#a78f64"/><stop offset="0.892" stop-color="#ab956b"/><stop offset="0.926" stop-color="#9e875e"/><stop offset="0.959" stop-color="#927b55"/><stop offset="0.985" stop-color="#8b7550"/><stop offset="1.000" stop-color="#86714f"/></linearGradient><linearGradient id="gF7" gradientUnits="userSpaceOnUse" x1="370" y1="0" x2="678" y2="0"><stop offset="0.000" stop-color="#a68e62"/><stop offset="0.226" stop-color="#ab9265"/><stop offset="0.430" stop-color="#b09769"/><stop offset="0.494" stop-color="#b8a073"/><stop offset="0.530" stop-color="#c0ab85"/><stop offset="0.623" stop-color="#c0ab85"/><stop offset="0.650" stop-color="#bda579"/><stop offset="0.707" stop-color="#b39a6d"/><stop offset="0.761" stop-color="#af9668"/><stop offset="0.881" stop-color="#ac9367"/><stop offset="0.910" stop-color="#ae966b"/><stop offset="0.938" stop-color="#a78f64"/><stop offset="0.966" stop-color="#a1895f"/><stop offset="0.988" stop-color="#9d855c"/><stop offset="1.000" stop-color="#9a835c"/></linearGradient><linearGradient id="gF8" gradientUnits="userSpaceOnUse" x1="370" y1="0" x2="678" y2="0"><stop offset="0.000" stop-color="#b1986b"/><stop offset="0.240" stop-color="#b1986b"/><stop offset="0.453" stop-color="#b1986b"/><stop offset="0.517" stop-color="#b1986b"/><stop offset="0.553" stop-color="#b1986b"/><stop offset="0.646" stop-color="#b1986b"/><stop offset="0.673" stop-color="#b1986b"/><stop offset="0.730" stop-color="#b1986b"/><stop offset="0.784" stop-color="#b1986b"/><stop offset="0.903" stop-color="#b1986b"/><stop offset="0.926" stop-color="#b1986b"/><stop offset="0.950" stop-color="#b1986b"/><stop offset="0.973" stop-color="#b1986b"/><stop offset="0.990" stop-color="#b1986b"/><stop offset="1.000" stop-color="#b1986b"/></linearGradient></defs>
<path d="M370.5,404.0 A153.5,73.0 0 0 0 677.5,404.0 L677.5,384.0 L370.5,384.0 Z" fill="url(#gF0)"/>
<path d="M372.7,402.6 A151.3,71.4 0 0 0 675.3,402.6 L675.3,382.6 L372.7,382.6 Z" fill="url(#gF1)"/>
<path d="M374.9,401.2 A149.1,69.8 0 0 0 673.1,401.2 L673.1,381.2 L374.9,381.2 Z" fill="url(#gF2)"/>
<path d="M377.1,399.9 A146.9,68.1 0 0 0 670.9,399.9 L670.9,379.9 L377.1,379.9 Z" fill="url(#gF3)"/>
<path d="M379.2,398.5 A144.8,66.5 0 0 0 668.8,398.5 L668.8,378.5 L379.2,378.5 Z" fill="url(#gF4)"/>
<path d="M381.4,397.1 A142.6,64.9 0 0 0 666.6,397.1 L666.6,377.1 L381.4,377.1 Z" fill="url(#gF5)"/>
<path d="M383.6,395.8 A140.4,63.2 0 0 0 664.4,395.8 L664.4,375.8 L383.6,375.8 Z" fill="url(#gF6)"/>
<path d="M385.8,394.4 A138.2,61.6 0 0 0 662.2,394.4 L662.2,374.4 L385.8,374.4 Z" fill="url(#gF7)"/>
<path d="M388.0,393.0 A136.0,60.0 0 0 0 660.0,393.0 L660.0,373.0 L388.0,373.0 Z" fill="url(#gF8)"/>
<path d="M470,472 A153.5,73 0 0 0 578,472" fill="none" stroke="#3a2e18" stroke-width="0.7"/>
<ellipse cx="524" cy="393" rx="136" ry="60" fill="#b1986b" stroke="#1a1408" stroke-width="0.8"/>
<path d="M492,611 L540,614 L540,658 L492,654 Z" fill="#b9b8e2" stroke="#3c3b5c" stroke-width="0.8"/>
<path d="M492,611 L540,614 L540,619 L492,616 Z" fill="#9c9bc8" stroke="#3c3b5c" stroke-width="0.6"/>
<path d="M505,626 L526,627 L526,636 L505,635 Z" fill="#e6e6f8" stroke="#3c3b5c" stroke-width="0.8"/>
<path d="M573.700,448.400 Q592,443 613,451 L616.500,458 L616.500,472 Q600,466 579.400,471 Q574,460 573.700,448.400 Z" fill="url(#gArmT)" stroke="#15100a" stroke-width="1.05"/>
<path d="M579.400,471 Q600,466 616.500,472 L616.500,520 Q606,510 596,512.500 Q588,515 580.500,514.500 Z" fill="url(#gArmF)" stroke="#15100a" stroke-width="1.05"/>
<path d="M615.800,446 L615.800,519 Q642,531 671,518 L671,446 Z" fill="url(#gLug2)" stroke="#15100a" stroke-width="1.05"/>
<ellipse cx="640" cy="446" rx="30.8" ry="15.4" fill="#b1986b" stroke="#15100a" stroke-width="1.05"/>
<ellipse cx="640.2" cy="444.5" rx="14.2" ry="7" fill="url(#gHole2)" stroke="#15100a" stroke-width="1.05"/>
<path d="M677.5,430 L677.5,545" stroke="#15100a" stroke-width="0.9"/>
<path d="M666.600,456 L666.600,519" stroke="#2a2010" stroke-width="0.7"/>
<path d="M638.600,430 Q638,422 644.300,417.600 Q654,420 659,431.500" fill="#a58c60" stroke="#15100a" stroke-width="0.9"/>
<path d="M644.300,417.600 Q656,405 660.200,384.600" fill="none" stroke="#15100a" stroke-width="0.9"/>
<path d="M377.500,362 C377.500,380 372.500,390 370.500,405 L378,405 L378,362 Z" fill="#8f774c"/>
<path d="M377.500,362 C377.500,380 372.500,390 370.500,405" fill="none" stroke="#15100a" stroke-width="1.05"/>
<path d="M438.5,316 L472,320 L472,330 L438.5,338 Z" fill="#b1986b" stroke="#15100a" stroke-width="1.05"/>
<path d="M438.5,327 Q452,324.500 462,324.500" fill="none" stroke="#15100a" stroke-width="1.05"/>
<path d="M377,315 L377,383 Q383,372 393,364 Q412,351 438.5,339.500 L438.5,315 Z" fill="url(#gLug)" stroke="#15100a" stroke-width="1.05"/>
<path d="M384.600,346 Q398,338.500 409,337 Q412.500,345.500 396,356 Q388,361 385.500,370 Z" fill="#927a52" stroke="#15100a" stroke-width="1.05"/>
<path d="M386.500,368 Q389,360.500 397,356.500 Q405,351 408.500,344" fill="none" stroke="#cbb78a" stroke-width="1.2"/>
<ellipse cx="408" cy="315" rx="30.5" ry="16.3" fill="#b1986b" stroke="#15100a" stroke-width="1.05"/>
<ellipse cx="408" cy="314.5" rx="14" ry="7" fill="url(#gHole)" stroke="#15100a" stroke-width="1.05"/>
<ellipse cx="524" cy="381" rx="102" ry="55" fill="#b1986b" stroke="#15100a" stroke-width="1.05"/>
<ellipse cx="524" cy="379" rx="98" ry="52" fill="none" stroke="#15100a" stroke-width="1.05"/>
<ellipse cx="524" cy="378" rx="88" ry="50" fill="url(#gBoss)" stroke="#15100a" stroke-width="1.05"/>
<path d="M436,380 A88,50 0 0 0 612,380 A88,46 0 0 1 436,380 Z" fill="#efe2c0" opacity="0.6"/>
<path d="M442,355 L442,383 A82,40 0 0 0 606,383 L606,355 Z" fill="url(#gBoss)" stroke="#15100a" stroke-width="1.05"/>
<ellipse cx="524" cy="355" rx="82" ry="41" fill="#b1986b" stroke="#15100a" stroke-width="1.05"/>
<ellipse cx="524" cy="356" rx="54.8" ry="27" fill="#b0afdc" stroke="#15142a" stroke-width="1"/>
<ellipse cx="523.700" cy="356" rx="47.800" ry="24.500" fill="#b4b3e0" stroke="#15142a" stroke-width="0.9"/>
<ellipse cx="523.400" cy="359" rx="27.400" ry="13.700" fill="#c8c8ee" stroke="#111" stroke-width="1.3"/>
<ellipse cx="523" cy="361" rx="22" ry="9" fill="#1c8a24" stroke="#063" stroke-width="0.6"/>
<ellipse cx="516" cy="361" rx="6" ry="6" fill="#6fd070" opacity="0.7"/>
<polygon points="562.2,342.2 561.9,342.9 571.0,344.8 569.0,347.5 559.1,346.7 557.6,347.3 557.3,348.2 556.6,348.7 563.4,352.0 559.3,354.2 550.7,351.9 548.9,352.2 547.9,353.0 546.7,353.4 550.5,357.4 544.8,358.9 538.7,355.4 536.7,355.4 535.2,355.9 533.8,356.1 533.9,360.5 527.4,360.9 524.6,356.7 522.7,356.4 520.9,356.7 519.4,356.6 515.9,360.7 509.5,360.1 510.4,355.7 508.9,355.1 506.9,355.1 505.6,354.8 498.9,358.1 493.5,356.5 497.9,352.5 497.0,351.7 495.2,351.4 494.2,350.9 485.3,352.9 481.5,350.6 488.9,347.6 488.7,346.7 487.3,346.1 486.8,345.5 476.8,346.0 475.2,343.2 484.6,341.6 485.1,340.7 484.3,339.9 484.3,339.3 474.6,338.1 475.4,335.3 485.5,335.3 486.7,334.6 486.6,333.7 487.1,333.1 479.0,330.5 482.2,328.0 491.6,329.5 493.3,329.1 493.9,328.2 494.9,327.8 489.5,324.0 494.4,322.2 501.9,325.1 503.9,325.0 505.2,324.3 506.5,324.0 504.5,319.7 510.7,318.8 515.2,322.7 517.2,322.9 518.9,322.4 520.4,322.4 522.1,318.0 528.6,318.1 529.6,322.5 531.3,323.0 533.3,322.8 534.7,323.0 539.9,319.2 545.9,320.4 543.2,324.6 544.4,325.3 546.3,325.5 547.5,325.9 555.5,323.2 560.1,325.2 554.1,328.7 554.6,329.6 556.3,330.1 557.1,330.6 566.7,329.4 569.4,332.0 560.9,334.3 560.7,335.2 561.8,335.9 562.1,336.5 572.1,336.9 572.5,339.8 562.6,340.6 561.7,341.4" fill="#8e3f42" stroke="#2a0c0c" stroke-width="0.7"/>
<polygon points="513.4,268.4 514.3,262.3 522.1,318.0 520.4,322.4" fill="#f0b0b0" stroke="#2a0c0c" stroke-width="0.6"/>
<polygon points="547.4,264.0 545.2,270.0 543.2,324.6 545.9,320.4" fill="#7e373a" stroke="#2a0c0c" stroke-width="0.6"/>
<polygon points="495.0,271.7 490.9,265.8 504.5,319.7 506.5,324.0" fill="#f0b0b0" stroke="#2a0c0c" stroke-width="0.6"/>
<polygon points="568.4,269.7 561.4,275.0 554.1,328.7 560.1,325.2" fill="#9d585a" stroke="#2a0c0c" stroke-width="0.6"/>
<polygon points="480.6,277.6 472.0,272.8 489.5,324.0 494.9,327.8" fill="#e9a9a9" stroke="#2a0c0c" stroke-width="0.6"/>
<polygon points="583.3,278.5 572.5,282.3 560.9,334.3 569.4,332.0" fill="#b26e70" stroke="#2a0c0c" stroke-width="0.6"/>
<polygon points="471.9,285.6 460.0,282.5 479.0,330.5 487.1,333.1" fill="#db9a9a" stroke="#2a0c0c" stroke-width="0.6"/>
<polygon points="572.5,282.3 572.6,283.5 560.7,335.2 560.9,334.3" fill="#742c30" stroke="#2a0c0c" stroke-width="0.6"/>
<polygon points="471.8,287.6 471.4,286.4 486.6,333.7 486.7,334.6" fill="#f0b0b0" stroke="#2a0c0c" stroke-width="0.6"/>
<polygon points="456.6,293.4 456.8,289.4 475.4,335.3 474.6,338.1" fill="#f0b0b0" stroke="#2a0c0c" stroke-width="0.6"/>
<polygon points="590.2,289.1 577.0,290.9 562.6,340.6 572.5,339.8" fill="#c17e7f" stroke="#2a0c0c" stroke-width="0.6"/>
<polygon points="577.0,290.9 576.1,292.0 561.7,341.4 562.6,340.6" fill="#8f494c" stroke="#2a0c0c" stroke-width="0.6"/>
<polygon points="470.2,294.3 456.6,293.4 474.6,338.1 484.3,339.3" fill="#cf8d8e" stroke="#2a0c0c" stroke-width="0.6"/>
<polygon points="470.4,295.2 470.2,294.3 484.3,339.3 484.3,339.9" fill="#f0b0b0" stroke="#2a0c0c" stroke-width="0.6"/>
<polygon points="471.8,296.3 470.4,295.2 484.3,339.9 485.1,340.7" fill="#f0b0b0" stroke="#2a0c0c" stroke-width="0.6"/>
<polygon points="577.0,293.2 576.9,294.1 561.9,342.9 562.2,342.2" fill="#772f33" stroke="#2a0c0c" stroke-width="0.6"/>
<polygon points="589.9,296.1 588.0,300.1 569.0,347.5 571.0,344.8" fill="#823b3e" stroke="#2a0c0c" stroke-width="0.6"/>
<polygon points="462.2,304.1 459.2,300.4 475.2,343.2 476.8,346.0" fill="#f0b0b0" stroke="#2a0c0c" stroke-width="0.6"/>
<polygon points="588.0,300.1 574.3,299.6 559.1,346.7 569.0,347.5" fill="#cc8a8b" stroke="#2a0c0c" stroke-width="0.6"/>
<polygon points="574.3,299.6 572.5,300.6 557.6,347.3 559.1,346.7" fill="#a96567" stroke="#2a0c0c" stroke-width="0.6"/>
<polygon points="572.5,300.6 572.5,301.8 557.3,348.2 557.6,347.3" fill="#742c30" stroke="#2a0c0c" stroke-width="0.6"/>
<polygon points="476.6,303.6 475.6,302.8 486.8,345.5 487.3,346.1" fill="#f0b0b0" stroke="#2a0c0c" stroke-width="0.6"/>
<polygon points="475.6,302.8 462.2,304.1 476.8,346.0 486.8,345.5" fill="#c48182" stroke="#2a0c0c" stroke-width="0.6"/>
<polygon points="478.7,304.4 476.6,303.6 487.3,346.1 488.7,346.7" fill="#e09f9f" stroke="#2a0c0c" stroke-width="0.6"/>
<polygon points="572.5,301.8 571.6,302.6 556.6,348.7 557.3,348.2" fill="#965053" stroke="#2a0c0c" stroke-width="0.6"/>
<polygon points="479.3,305.6 478.7,304.4 488.7,346.7 488.9,347.6" fill="#f0b0b0" stroke="#2a0c0c" stroke-width="0.6"/>
<polygon points="564.7,307.3 562.3,307.9 548.9,352.2 550.7,351.9" fill="#ba7779" stroke="#2a0c0c" stroke-width="0.6"/>
<polygon points="562.3,307.9 561.3,309.0 547.9,353.0 548.9,352.2" fill="#924c4f" stroke="#2a0c0c" stroke-width="0.6"/>
<polygon points="489.1,310.4 487.6,309.8 494.2,350.9 495.2,351.4" fill="#e2a1a1" stroke="#2a0c0c" stroke-width="0.6"/>
<polygon points="582.0,306.6 577.2,309.9 559.3,354.2 563.4,352.0" fill="#a05b5e" stroke="#2a0c0c" stroke-width="0.6"/>
<polygon points="577.2,309.9 564.7,307.3 550.7,351.9 559.3,354.2" fill="#d89697" stroke="#2a0c0c" stroke-width="0.6"/>
<polygon points="491.7,310.8 489.1,310.4 495.2,351.4 497.0,351.7" fill="#d39292" stroke="#2a0c0c" stroke-width="0.6"/>
<polygon points="561.3,309.0 559.8,309.6 546.7,353.4 547.9,353.0" fill="#ae6a6c" stroke="#2a0c0c" stroke-width="0.6"/>
<polygon points="493.2,311.8 491.7,310.8 497.0,351.7 497.9,352.5" fill="#eeaeae" stroke="#2a0c0c" stroke-width="0.6"/>
<polygon points="487.6,309.8 476.1,313.2 485.3,352.9 494.2,350.9" fill="#b67374" stroke="#2a0c0c" stroke-width="0.6"/>
<polygon points="476.1,313.2 470.3,310.2 481.5,350.6 485.3,352.9" fill="#e7a7a7" stroke="#2a0c0c" stroke-width="0.6"/>
<polygon points="549.6,313.0 546.9,313.1 536.7,355.4 538.7,355.4" fill="#c78486" stroke="#2a0c0c" stroke-width="0.6"/>
<polygon points="546.9,313.1 545.0,314.0 535.2,355.9 536.7,355.4" fill="#ab6769" stroke="#2a0c0c" stroke-width="0.6"/>
<polygon points="506.3,314.7 504.4,314.4 505.6,354.8 506.9,355.1" fill="#d59394" stroke="#2a0c0c" stroke-width="0.6"/>
<polygon points="509.0,314.6 506.3,314.7 506.9,355.1 508.9,355.1" fill="#c88687" stroke="#2a0c0c" stroke-width="0.6"/>
<polygon points="545.0,314.0 543.1,314.3 533.8,356.1 535.2,355.9" fill="#be7a7c" stroke="#2a0c0c" stroke-width="0.6"/>
<polygon points="511.2,315.4 509.0,314.6 508.9,355.1 510.4,355.7" fill="#df9d9e" stroke="#2a0c0c" stroke-width="0.6"/>
<polygon points="530.9,315.8 528.3,315.5 522.7,356.4 524.6,356.7" fill="#d29091" stroke="#2a0c0c" stroke-width="0.6"/>
<polygon points="528.3,315.5 525.8,316.0 520.9,356.7 522.7,356.4" fill="#bc787a" stroke="#2a0c0c" stroke-width="0.6"/>
<polygon points="559.1,317.4 549.6,313.0 538.7,355.4 544.8,358.9" fill="#e5a5a5" stroke="#2a0c0c" stroke-width="0.6"/>
<polygon points="525.8,316.0 523.8,316.0 519.4,356.6 520.9,356.7" fill="#ca8788" stroke="#2a0c0c" stroke-width="0.6"/>
<polygon points="504.4,314.4 496.4,319.4 498.9,358.1 505.6,354.8" fill="#a35e61" stroke="#2a0c0c" stroke-width="0.6"/>
<polygon points="566.3,315.1 559.1,317.4 544.8,358.9 550.5,357.4" fill="#b47172" stroke="#2a0c0c" stroke-width="0.6"/>
<polygon points="496.4,319.4 488.5,317.6 493.5,356.5 498.9,358.1" fill="#d99899" stroke="#2a0c0c" stroke-width="0.6"/>
<polygon points="511.5,321.5 511.2,315.4 510.4,355.7 509.5,360.1" fill="#f0b0b0" stroke="#2a0c0c" stroke-width="0.6"/>
<polygon points="536.2,321.5 530.9,315.8 524.6,356.7 527.4,360.9" fill="#f0b0b0" stroke="#2a0c0c" stroke-width="0.6"/>
<polygon points="523.8,316.0 520.4,322.0 515.9,360.7 519.4,356.6" fill="#863f42" stroke="#2a0c0c" stroke-width="0.6"/>
<polygon points="544.8,320.4 536.2,321.5 527.4,360.9 533.9,360.5" fill="#c27f81" stroke="#2a0c0c" stroke-width="0.6"/>
<polygon points="520.4,322.0 511.5,321.5 509.5,360.1 515.9,360.7" fill="#ce8c8d" stroke="#2a0c0c" stroke-width="0.6"/>
<polygon points="577.0,293.2 576.9,294.1 589.9,296.1 588.0,300.1 574.3,299.6 572.5,300.6 572.5,301.8 571.6,302.6 582.0,306.6 577.2,309.9 564.7,307.3 562.3,307.9 561.3,309.0 559.8,309.6 566.3,315.1 559.1,317.4 549.6,313.0 546.9,313.1 545.0,314.0 543.1,314.3 544.8,320.4 536.2,321.5 530.9,315.8 528.3,315.5 525.8,316.0 523.8,316.0 520.4,322.0 511.5,321.5 511.2,315.4 509.0,314.6 506.3,314.7 504.4,314.4 496.4,319.4 488.5,317.6 493.2,311.8 491.7,310.8 489.1,310.4 487.6,309.8 476.1,313.2 470.3,310.2 479.3,305.6 478.7,304.4 476.6,303.6 475.6,302.8 462.2,304.1 459.2,300.4 471.3,297.5 471.8,296.3 470.4,295.2 470.2,294.3 456.6,293.4 456.8,289.4 470.4,288.7 471.8,287.6 471.4,286.4 471.9,285.6 460.0,282.5 463.4,278.8 476.7,280.3 478.8,279.6 479.4,278.4 480.6,277.6 472.0,272.8 478.1,269.9 489.3,273.5 491.9,273.2 493.4,272.1 495.0,271.7 490.9,265.8 499.0,264.1 506.5,269.2 509.2,269.3 511.4,268.6 513.4,268.4 514.3,262.3 523.1,262.0 526.0,268.0 528.5,268.6 531.1,268.2 533.1,268.4 538.8,262.8 547.4,264.0 545.2,270.0 547.0,270.9 549.8,271.1 551.5,271.5 561.4,267.3 568.4,269.7 561.4,275.0 562.4,276.2 564.9,276.7 566.1,277.4 578.8,275.0 583.3,278.5 572.5,282.3 572.6,283.5 574.4,284.5 575.0,285.3 588.7,285.1 590.2,289.1 577.0,290.9 576.1,292.0" fill="#d86f6f" stroke="#2a0c0c" stroke-width="0.9"/>
<path d="M490.5,318 L500,355" stroke="#ffffff" stroke-width="2.5"/>
<path d="M503,275 L503,295 A20.5,9 0 0 0 544,295 L544,275 Z" fill="url(#gShaft)" stroke="#032a05" stroke-width="0.8"/>
<ellipse cx="523.5" cy="275" rx="20.5" ry="8" fill="#0f6f17" stroke="#032a05" stroke-width="0.8"/>
<path d="M507,257 L507,274 A16.5,6.5 0 0 0 540,274 L540,257 Z" fill="url(#gShaft)" stroke="#032a05" stroke-width="0.8"/>
<ellipse cx="523.5" cy="257.500" rx="16.500" ry="6.500" fill="#127a1a" stroke="#032a05" stroke-width="0.8"/>
<path d="M496,355.700 L490.900,359.800 L531.200,372.200 L556,353" fill="none" stroke="#22dd22" stroke-width="1.1"/>
<path d="M510.500,358 L510.500,368" stroke="#2233ee" stroke-width="1.6"/>
<path d="M514.500,363.600 L507,366.200" stroke="#ee1111" stroke-width="3.2" stroke-linecap="round"/>
<path d="M539,361 L548,364.300" stroke="#2233ee" stroke-width="2.2"/><path d="M540,360.500 L545,362.300" stroke="#fff" stroke-width="0.9"/>
<path d="M524,374 L524,379" stroke="#8fcf8f" stroke-width="2" opacity="0.8"/>
<text x="500.500" y="376.500" font-family="Liberation Sans, sans-serif" font-size="17" fill="#ee1111">X</text>
<text x="548.500" y="371.500" font-family="Liberation Sans, sans-serif" font-size="17" fill="#2233ee">Z</text>
<text x="518" y="391.500" font-family="Liberation Sans, sans-serif" font-size="17" fill="#8fcf8f" opacity="0.85">Y</text>
<text x="543" y="253.500" font-family="Liberation Sans, sans-serif" font-size="13.500" letter-spacing="1.300" fill="#f03838">E66527</text>
<path d="M359.700,637.800 L359.700,660" stroke="#11cc11" stroke-width="3.4"/>
<path d="M359.700,664.500 l-3.600,-7.500 h7.200 z" fill="#0aa00a"/>
<path d="M359.700,637.800 L377,643.700" stroke="#2233ee" stroke-width="2.4"/>
<path d="M383,645.800 l-8.500,-5.200 l-1.800,5.800 z" fill="#1a1a99"/>
<path d="M359.700,637.800 L349,646.300" stroke="#ee1111" stroke-width="3.6"/>
<path d="M344,650.300 l3,-7.500 l6,3 l-3,4.500 z" fill="#ee1111"/>
<text x="336" y="659.500" font-family="Liberation Sans, sans-serif" font-size="17" fill="#ee1111">X</text>
<text x="384.300" y="654.800" font-family="Liberation Sans, sans-serif" font-size="17" fill="#2233ee">Z</text>
<text x="354.500" y="675" font-family="Liberation Sans, sans-serif" font-size="17" fill="#22dd22">Y</text>
</svg>
<div class="t" style="left:318px;top:231px;font-size:13px;color:#000">按下&lt;F2&gt;动态的观察</div>
<div class="t" style="left:318px;top:250px;font-size:13px;color:#000">&lt;F8&gt;或者&lt;Shift-roll&gt; 查找下一个有效的过滤器设置.</div>
<div class="t" style="left:308px;top:675px;font-size:17.7px;line-height:20px;height:20px;color:#111">144.286 mm</div>
<div class="a" style="left:303px;top:697px;width:857px;height:5px;background:#e4e6e9;border-top:1px solid #b9bdc2"></div>
<div class="a" style="left:848px;top:698px;width:1px;height:4px;background:#555"></div>
<div class="a" style="left:1154.5px;top:672.5px;width:55px;height:55px;border-radius:50%;background:#0f7a4a;border:2px solid #fff;box-shadow:0 0 0 1px #9a9da2"></div>
<div class="a" style="left:752px;top:252px;width:302px;height:299px;background:#e2e5e8;border:1px solid #5f646b;box-shadow:inset 0 0 0 1px #fafafa"></div>
<div class="t" style="left:781px;top:261px;color:#444;font-size:12.5px">显示开放边</div>
<div class="a" style="left:759px;top:287px;width:288px;height:222px;border:1px solid #b4b7bb;box-shadow:inset 1px 1px 0 #fff"></div>
<div class="t" style="left:769px;top:301.5px;color:#111">开放边数</div>
<div class="a" style="left:862px;top:298px;width:174px;height:24px;background:#efefef;border:1px solid #d0d3d6"></div>
<div class="t" style="left:872px;top:302.5px;color:#111">32</div>
<div class="a" style="left:861px;top:296px;width:37px;height:26px;border:2px solid #b40c10;box-shadow:2px 3px 4px rgba(0,0,0,.3),inset 2px 3px 3px rgba(0,0,0,.22)"></div>
<div class="a" style="left:770px;top:336px;width:265px;height:161px;border:1px solid #b4b7bb;box-shadow:inset 1px 1px 0 #fff"></div>
<div class="a" style="left:777px;top:329px;width:18px;height:14px;background:#e2e5e8"></div>
<div class="t" style="left:779px;top:328.5px;color:#111">边</div>
<div class="a" style="left:781px;top:356px;width:40px;height:40px;background:#f8f8f8;border:1px solid #d4d6d8"></div>
<div class="a" style="left:985px;top:356px;width:40px;height:40px;background:#f8f8f8;border:1px solid #d4d6d8"></div>
<div class="a" style="left:827px;top:364px;width:152px;height:24px;background:#fff;border:1px solid #c6cace"></div>
<div class="t" style="left:832px;top:368px;color:#111">1</div>
<div class="t" style="left:781px;top:405.5px;color:#111">编号</div>
<div class="a" style="left:867px;top:402px;width:158px;height:24px;background:#efefef;border:1px solid #d0d3d6"></div>
<div class="t" style="left:872px;top:406.5px;color:#111">66527</div>
<div class="t" style="left:781px;top:436px;color:#111">长度</div>
<div class="a" style="left:867px;top:432px;width:158px;height:24px;background:#efefef;border:1px solid #d0d3d6"></div>
<div class="t" style="left:872px;top:436.5px;color:#111">1.159455</div>
<div class="a" style="left:781px;top:462px;width:244px;height:27px;background:#fbfbfb;border:1px solid #d0d3d6"></div>
<div class="t c" style="left:843.0px;top:467.5px;width:120px;color:#111">缩放到</div>
<div class="a" style="left:824px;top:516px;width:75px;height:27px;background:#fbfbfb;border:1px solid #d0d3d6"></div>
<div class="t c" style="left:801.0px;top:521.5px;width:120px;color:#111">重置</div>
<div class="a" style="left:907px;top:516px;width:75px;height:27px;background:#fbfbfb;border:1px solid #e5a823;box-shadow:inset 0 0 0 1px #f8dc96"></div>
<div class="t c" style="left:884.0px;top:521.5px;width:120px;color:#111">确定</div>
<svg style="left:750px;top:250px" width="310" height="310" viewBox="750 250 310 310"><defs><linearGradient id="dArr" x1="0" y1="0" x2="0" y2="1"><stop offset="0" stop-color="#8fdcf4"/><stop offset="0.5" stop-color="#2aa8dc"/><stop offset="1" stop-color="#0f6fa4"/></linearGradient>
<linearGradient id="dLogo" x1="0" y1="0" x2="1" y2="1"><stop offset="0" stop-color="#2f8fe0"/><stop offset="1" stop-color="#0a2f7a"/></linearGradient></defs><path d="M761,262.500 L769,261 L776.500,262.500 L774,272 L769,277 L763.500,272 Z" fill="url(#dLogo)"/><path d="M764.500,268.500 Q763.500,266 766.500,266 L768,263 Q769.500,261.500 770.500,263.500 L769,267.500 L771.500,266 L770.500,270 L773,269" fill="none" stroke="#fff" stroke-width="1.800" stroke-linejoin="round" stroke-linecap="round"/><path d="M1003.500,265.500 H1013.500 V270 H1008.500 L1006.500,272.500 V270 H1003.500 Z" fill="#fff" stroke="#8a8d92" stroke-width="1"/><path d="M1030.500,266 L1039,272.500 M1039,266 L1030.500,272.500" stroke="#8a8d92" stroke-width="4.400" stroke-linecap="square"/><path d="M1030.500,266 L1039,272.500 M1039,266 L1030.500,272.500" stroke="#fff" stroke-width="2.600" stroke-linecap="square"/><path d="M787.500,376 L801,365.500 V371 H814 V381 H801 V386.500 Z" fill="url(#dArr)" stroke="#1a7aa8" stroke-width="0.600"/><path d="M1018.500,376 L1005,365.500 V371 H992 V381 H1005 V386.500 Z" fill="url(#dArr)" stroke="#1a7aa8" stroke-width="0.600"/></svg>
</body></html>
